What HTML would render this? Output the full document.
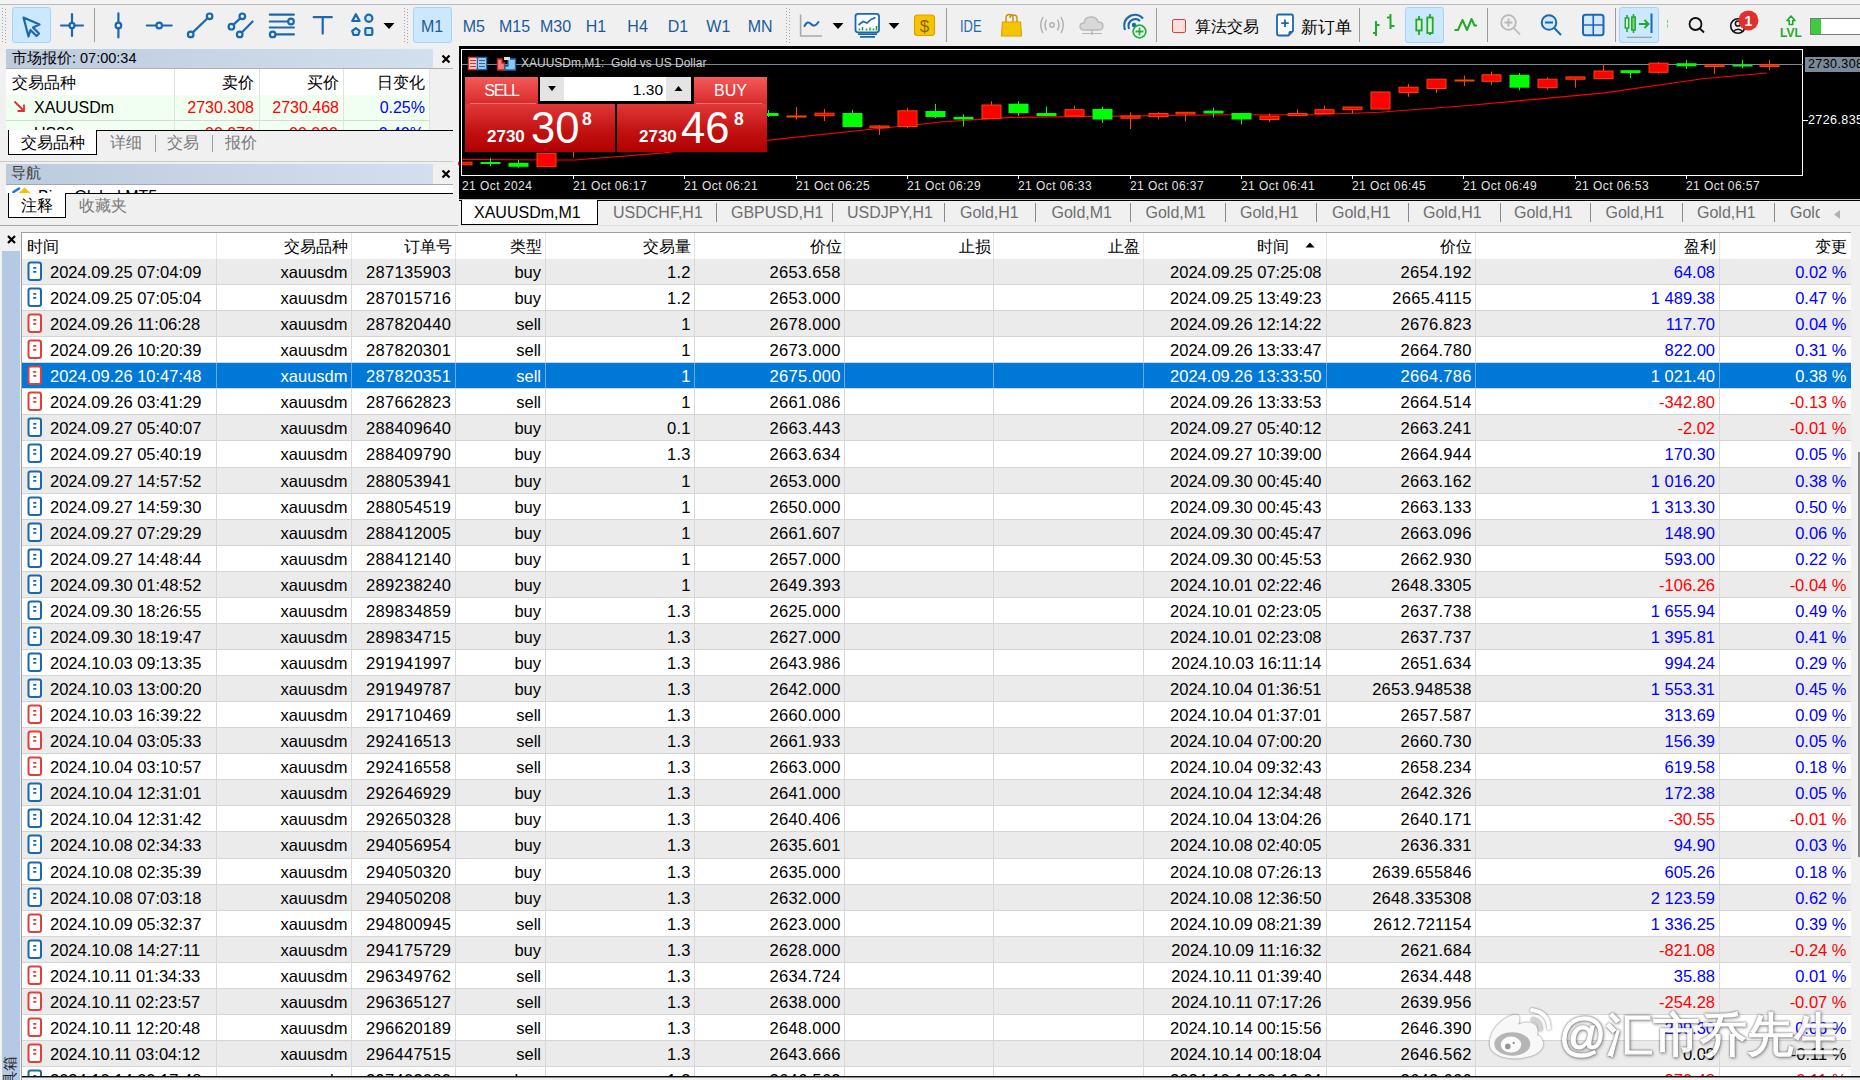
<!DOCTYPE html>
<html><head><meta charset="utf-8"><style>
html,body{margin:0;padding:0;}
body{width:1860px;height:1080px;overflow:hidden;position:relative;background:#f0f0f0;font-family:"Liberation Sans",sans-serif;}
div{box-sizing:content-box}
</style></head><body>
<div style="position:absolute;left:0;top:0;width:1860px;height:4px;background:#f3f3f3"></div>
<div style="position:absolute;left:0;top:4px;width:1860px;height:1px;background:#b8b8b8"></div>
<div style="position:absolute;left:0;top:5px;width:1860px;height:41px;background:#f0f0f0"></div>
<div style="position:absolute;left:2px;top:8px;width:1px;height:1px;background:#a8a8a8"></div><div style="position:absolute;left:5px;top:9px;width:1px;height:1px;background:#a8a8a8"></div><div style="position:absolute;left:2px;top:11px;width:1px;height:1px;background:#a8a8a8"></div><div style="position:absolute;left:5px;top:12px;width:1px;height:1px;background:#a8a8a8"></div><div style="position:absolute;left:2px;top:14px;width:1px;height:1px;background:#a8a8a8"></div><div style="position:absolute;left:5px;top:15px;width:1px;height:1px;background:#a8a8a8"></div><div style="position:absolute;left:2px;top:17px;width:1px;height:1px;background:#a8a8a8"></div><div style="position:absolute;left:5px;top:18px;width:1px;height:1px;background:#a8a8a8"></div><div style="position:absolute;left:2px;top:20px;width:1px;height:1px;background:#a8a8a8"></div><div style="position:absolute;left:5px;top:21px;width:1px;height:1px;background:#a8a8a8"></div><div style="position:absolute;left:2px;top:23px;width:1px;height:1px;background:#a8a8a8"></div><div style="position:absolute;left:5px;top:24px;width:1px;height:1px;background:#a8a8a8"></div><div style="position:absolute;left:2px;top:26px;width:1px;height:1px;background:#a8a8a8"></div><div style="position:absolute;left:5px;top:27px;width:1px;height:1px;background:#a8a8a8"></div><div style="position:absolute;left:2px;top:29px;width:1px;height:1px;background:#a8a8a8"></div><div style="position:absolute;left:5px;top:30px;width:1px;height:1px;background:#a8a8a8"></div><div style="position:absolute;left:2px;top:32px;width:1px;height:1px;background:#a8a8a8"></div><div style="position:absolute;left:5px;top:33px;width:1px;height:1px;background:#a8a8a8"></div><div style="position:absolute;left:2px;top:35px;width:1px;height:1px;background:#a8a8a8"></div><div style="position:absolute;left:5px;top:36px;width:1px;height:1px;background:#a8a8a8"></div><div style="position:absolute;left:2px;top:38px;width:1px;height:1px;background:#a8a8a8"></div><div style="position:absolute;left:5px;top:39px;width:1px;height:1px;background:#a8a8a8"></div><div style="position:absolute;left:2px;top:41px;width:1px;height:1px;background:#a8a8a8"></div><div style="position:absolute;left:5px;top:42px;width:1px;height:1px;background:#a8a8a8"></div>
<div style="position:absolute;left:12px;top:7px;width:37px;height:34px;background:#cce8ff;border:1px solid #a6d3f7;border-radius:3px"></div>
<svg style="position:absolute;left:0px;top:0px;" width="460" height="46" viewBox="0 0 460 46"><path d="M23.5 17.5 L39.5 24.5 L33 27.5 L39 33.5 L36.5 36 L30.5 30 L28.5 36.5 Z" stroke="#1a69b0" fill="none" stroke-width="2.2" stroke-linejoin="round" stroke-linecap="round"/><path d="M61 25.5 H69.5 M74.5 25.5 H83 M72 14 V23 M72 28 V36" stroke="#1a69b0" fill="none" stroke-width="2.2" stroke-linejoin="round" stroke-linecap="round"/><circle cx="72" cy="25.5" r="2.6" stroke="#1a69b0" fill="none" stroke-width="2.2" stroke-linejoin="round" stroke-linecap="round"/><path d="M118.4 13.4 V22.5 M118.4 28.5 V37.5" stroke="#1a69b0" fill="none" stroke-width="2.2" stroke-linejoin="round" stroke-linecap="round"/><circle cx="118.4" cy="25.5" r="2.8" stroke="#1a69b0" fill="none" stroke-width="2.2" stroke-linejoin="round" stroke-linecap="round"/><path d="M146.8 25.5 H156.2 M162.2 25.5 H171.7" stroke="#1a69b0" fill="none" stroke-width="2.2" stroke-linejoin="round" stroke-linecap="round"/><circle cx="159.2" cy="25.5" r="2.8" stroke="#1a69b0" fill="none" stroke-width="2.2" stroke-linejoin="round" stroke-linecap="round"/><path d="M192.8 32.4 L207.5 18.3" stroke="#1a69b0" fill="none" stroke-width="2.2" stroke-linejoin="round" stroke-linecap="round"/><circle cx="190.7" cy="34.4" r="2.8" stroke="#1a69b0" fill="none" stroke-width="2.2" stroke-linejoin="round" stroke-linecap="round"/><circle cx="209.6" cy="16.3" r="2.8" stroke="#1a69b0" fill="none" stroke-width="2.2" stroke-linejoin="round" stroke-linecap="round"/><path d="M233.5 24.6 L240.2 18.4 M241.8 32.4 L252.6 21.5" stroke="#1a69b0" fill="none" stroke-width="2.2" stroke-linejoin="round" stroke-linecap="round"/><circle cx="242.3" cy="16.3" r="2.8" stroke="#1a69b0" fill="none" stroke-width="2.2" stroke-linejoin="round" stroke-linecap="round"/><circle cx="231.4" cy="26.7" r="2.8" stroke="#1a69b0" fill="none" stroke-width="2.2" stroke-linejoin="round" stroke-linecap="round"/><circle cx="239.7" cy="34.4" r="2.8" stroke="#1a69b0" fill="none" stroke-width="2.2" stroke-linejoin="round" stroke-linecap="round"/><path d="M269.8 14.6 H293.9 M269.8 21.5 H288 M269.8 27.5 H293.9 M275.7 34.4 H293.9" stroke="#1a69b0" fill="none" stroke-width="2.2" stroke-linejoin="round" stroke-linecap="round"/><circle cx="291" cy="21.5" r="2.8" stroke="#1a69b0" fill="none" stroke-width="2.2" stroke-linejoin="round" stroke-linecap="round"/><circle cx="272.7" cy="34.4" r="2.8" stroke="#1a69b0" fill="none" stroke-width="2.2" stroke-linejoin="round" stroke-linecap="round"/><path d="M313.7 17.2 H331.8 M322.7 17.2 V33.6" stroke="#1a69b0" fill="none" stroke-width="2.2" stroke-linejoin="round" stroke-linecap="round"/><path d="M355.9 14.2 L359.6 21 H352.2 Z" fill="#cfe6fb" stroke="#1a69b0" fill="none" stroke-width="2.2" stroke-linejoin="round" stroke-linecap="round"/><circle cx="368.8" cy="18.2" r="3.6" fill="#cfe6fb" stroke="#1a69b0" stroke-width="2.2"/><path d="M355.9 28.2 L359.6 30.8 L358.3 35 H353.5 L352.2 30.8 Z" fill="#cfe6fb" stroke="#1a69b0" fill="none" stroke-width="2.2" stroke-linejoin="round" stroke-linecap="round"/><rect x="365.3" y="28" width="7" height="7" rx="1.2" fill="#cfe6fb" stroke="#1a69b0" fill="none" stroke-width="2.2" stroke-linejoin="round" stroke-linecap="round"/></svg>
<div style="position:absolute;left:94px;top:8px;width:1px;height:34px;background:#9a9a9a"></div>
<svg style="position:absolute;left:382px;top:21.5px;" width="14" height="8" viewBox="382 21.5 14 8"><path d="M383.5 22.5 L394.5 22.5 L389 28.5 Z" fill="#000"/></svg>
<div style="position:absolute;left:404px;top:8px;width:1px;height:1px;background:#a8a8a8"></div><div style="position:absolute;left:407px;top:9px;width:1px;height:1px;background:#a8a8a8"></div><div style="position:absolute;left:404px;top:11px;width:1px;height:1px;background:#a8a8a8"></div><div style="position:absolute;left:407px;top:12px;width:1px;height:1px;background:#a8a8a8"></div><div style="position:absolute;left:404px;top:14px;width:1px;height:1px;background:#a8a8a8"></div><div style="position:absolute;left:407px;top:15px;width:1px;height:1px;background:#a8a8a8"></div><div style="position:absolute;left:404px;top:17px;width:1px;height:1px;background:#a8a8a8"></div><div style="position:absolute;left:407px;top:18px;width:1px;height:1px;background:#a8a8a8"></div><div style="position:absolute;left:404px;top:20px;width:1px;height:1px;background:#a8a8a8"></div><div style="position:absolute;left:407px;top:21px;width:1px;height:1px;background:#a8a8a8"></div><div style="position:absolute;left:404px;top:23px;width:1px;height:1px;background:#a8a8a8"></div><div style="position:absolute;left:407px;top:24px;width:1px;height:1px;background:#a8a8a8"></div><div style="position:absolute;left:404px;top:26px;width:1px;height:1px;background:#a8a8a8"></div><div style="position:absolute;left:407px;top:27px;width:1px;height:1px;background:#a8a8a8"></div><div style="position:absolute;left:404px;top:29px;width:1px;height:1px;background:#a8a8a8"></div><div style="position:absolute;left:407px;top:30px;width:1px;height:1px;background:#a8a8a8"></div><div style="position:absolute;left:404px;top:32px;width:1px;height:1px;background:#a8a8a8"></div><div style="position:absolute;left:407px;top:33px;width:1px;height:1px;background:#a8a8a8"></div><div style="position:absolute;left:404px;top:35px;width:1px;height:1px;background:#a8a8a8"></div><div style="position:absolute;left:407px;top:36px;width:1px;height:1px;background:#a8a8a8"></div><div style="position:absolute;left:404px;top:38px;width:1px;height:1px;background:#a8a8a8"></div><div style="position:absolute;left:407px;top:39px;width:1px;height:1px;background:#a8a8a8"></div><div style="position:absolute;left:404px;top:41px;width:1px;height:1px;background:#a8a8a8"></div><div style="position:absolute;left:407px;top:42px;width:1px;height:1px;background:#a8a8a8"></div>
<div style="position:absolute;left:413px;top:7px;width:37px;height:34px;background:#cce8ff;border:1px solid #a6d3f7;border-radius:3px"></div>
<div style="position:absolute;left:402px;top:17px;width:60px;text-align:center;font-size:16px;line-height:20px;color:#1a5a9a">M1</div>
<div style="position:absolute;left:443.8px;top:17px;width:60px;text-align:center;font-size:16px;line-height:20px;color:#1a5a9a">M5</div>
<div style="position:absolute;left:484.6px;top:17px;width:60px;text-align:center;font-size:16px;line-height:20px;color:#1a5a9a">M15</div>
<div style="position:absolute;left:525.5px;top:17px;width:60px;text-align:center;font-size:16px;line-height:20px;color:#1a5a9a">M30</div>
<div style="position:absolute;left:566px;top:17px;width:60px;text-align:center;font-size:16px;line-height:20px;color:#1a5a9a">H1</div>
<div style="position:absolute;left:607.6px;top:17px;width:60px;text-align:center;font-size:16px;line-height:20px;color:#1a5a9a">H4</div>
<div style="position:absolute;left:648px;top:17px;width:60px;text-align:center;font-size:16px;line-height:20px;color:#1a5a9a">D1</div>
<div style="position:absolute;left:688.3px;top:17px;width:60px;text-align:center;font-size:16px;line-height:20px;color:#1a5a9a">W1</div>
<div style="position:absolute;left:730.2px;top:17px;width:60px;text-align:center;font-size:16px;line-height:20px;color:#1a5a9a">MN</div>
<div style="position:absolute;left:786px;top:8px;width:1px;height:1px;background:#a8a8a8"></div><div style="position:absolute;left:789px;top:9px;width:1px;height:1px;background:#a8a8a8"></div><div style="position:absolute;left:786px;top:11px;width:1px;height:1px;background:#a8a8a8"></div><div style="position:absolute;left:789px;top:12px;width:1px;height:1px;background:#a8a8a8"></div><div style="position:absolute;left:786px;top:14px;width:1px;height:1px;background:#a8a8a8"></div><div style="position:absolute;left:789px;top:15px;width:1px;height:1px;background:#a8a8a8"></div><div style="position:absolute;left:786px;top:17px;width:1px;height:1px;background:#a8a8a8"></div><div style="position:absolute;left:789px;top:18px;width:1px;height:1px;background:#a8a8a8"></div><div style="position:absolute;left:786px;top:20px;width:1px;height:1px;background:#a8a8a8"></div><div style="position:absolute;left:789px;top:21px;width:1px;height:1px;background:#a8a8a8"></div><div style="position:absolute;left:786px;top:23px;width:1px;height:1px;background:#a8a8a8"></div><div style="position:absolute;left:789px;top:24px;width:1px;height:1px;background:#a8a8a8"></div><div style="position:absolute;left:786px;top:26px;width:1px;height:1px;background:#a8a8a8"></div><div style="position:absolute;left:789px;top:27px;width:1px;height:1px;background:#a8a8a8"></div><div style="position:absolute;left:786px;top:29px;width:1px;height:1px;background:#a8a8a8"></div><div style="position:absolute;left:789px;top:30px;width:1px;height:1px;background:#a8a8a8"></div><div style="position:absolute;left:786px;top:32px;width:1px;height:1px;background:#a8a8a8"></div><div style="position:absolute;left:789px;top:33px;width:1px;height:1px;background:#a8a8a8"></div><div style="position:absolute;left:786px;top:35px;width:1px;height:1px;background:#a8a8a8"></div><div style="position:absolute;left:789px;top:36px;width:1px;height:1px;background:#a8a8a8"></div><div style="position:absolute;left:786px;top:38px;width:1px;height:1px;background:#a8a8a8"></div><div style="position:absolute;left:789px;top:39px;width:1px;height:1px;background:#a8a8a8"></div><div style="position:absolute;left:786px;top:41px;width:1px;height:1px;background:#a8a8a8"></div><div style="position:absolute;left:789px;top:42px;width:1px;height:1px;background:#a8a8a8"></div>
<svg style="position:absolute;left:780px;top:0px;" width="400" height="46" viewBox="780 0 400 46"><path d="M800.6 14.6 V36 H822" stroke="#a8a8a8" stroke-width="1.6" fill="none"/><path d="M804.5 26 Q807.5 20 811 24 T818.5 22" stroke="#1a69b0" stroke-width="2" fill="none" stroke-linecap="round"/><rect x="855.5" y="13.8" width="23.5" height="18.5" rx="2.5" fill="#fff" stroke="#1a69b0" stroke-width="1.8"/><path d="M858.5 25 L863 21.5 L867 23 L871 19.5 L875.5 17.5" stroke="#1a69b0" stroke-width="1.6" fill="none"/><path d="M859.5 30.5 V28.5 M862.5 30.5 V27 M866.5 30.5 V28.5 M870 30.5 V27.5 M873.5 30.5 V28.5 M876.5 30.5 V26" stroke="#1fa33a" stroke-width="1.6"/><path d="M858 34.2 H877 M860 36.8 H875" stroke="#1a69b0" stroke-width="1.8"/><rect x="914.5" y="15" width="20" height="20.5" rx="3" fill="#f7c500" stroke="#d9a300" stroke-width="1.2"/><text x="924.5" y="31.5" text-anchor="middle" font-family="Liberation Sans" font-size="17" fill="#8a6400">$</text><text x="960" y="31.8" font-family="Liberation Sans" font-size="16.5" textLength="21.5" lengthAdjust="spacingAndGlyphs" fill="#1a69b0">IDE</text><path d="M1002.5 22 H1020.5 L1021.5 36 H1001.5 Z" fill="#f7c500" stroke="#d9a300" stroke-width="1.2"/><path d="M1006 22 V18 Q1006 14.5 1009.5 14.5 Q1013 14.5 1013 18 V22 M1010 18 Q1010 15 1013.5 15 Q1017 15 1017 18 V22" stroke="#c79000" stroke-width="1.4" fill="none"/><circle cx="1052" cy="25" r="2.2" fill="none" stroke="#b0b0b0" stroke-width="1.5"/><path d="M1046.5 19.5 Q1043.5 25 1046.5 30.5 M1057.5 19.5 Q1060.5 25 1057.5 30.5 M1043 17 Q1038.5 25 1043 33 M1061 17 Q1065.5 25 1061 33" stroke="#b0b0b0" stroke-width="1.5" fill="none"/><path d="M1084 30 Q1080 30 1080 26.5 Q1080 23 1084 23 Q1084.5 17 1091 17 Q1097 17 1098 22 Q1103 22 1103 26 Q1103 30 1099 30 Z" fill="#d8d8d8" stroke="#b8b8b8" stroke-width="1.3"/><path d="M1092 30 V33.5 M1082 33.5 H1102" stroke="#b8b8b8" stroke-width="1.2"/><circle cx="1092" cy="33.5" r="1.3" fill="#b8b8b8"/><path d="M1125 30 Q1122 20 1131 15.5 Q1138 13 1143 18.5" stroke="#1a69b0" stroke-width="2" fill="none"/><path d="M1129 29 Q1127 22 1133 19.5 Q1137 18 1140 21" stroke="#1a69b0" stroke-width="2" fill="none"/><circle cx="1134" cy="25" r="2.2" fill="#1a69b0"/><circle cx="1139.5" cy="31.5" r="6.3" fill="#fff" stroke="#22b03c" stroke-width="1.8"/><path d="M1139.5 27.5 V35.5 M1135.5 31.5 H1143.5" stroke="#22b03c" stroke-width="1.8"/></svg>
<svg style="position:absolute;left:831px;top:21.5px;" width="14" height="8" viewBox="831 21.5 14 8"><path d="M832.5 22.5 L843.5 22.5 L838 28.5 Z" fill="#000"/></svg>
<svg style="position:absolute;left:887px;top:21.5px;" width="14" height="8" viewBox="887 21.5 14 8"><path d="M888.5 22.5 L899.5 22.5 L894 28.5 Z" fill="#000"/></svg>
<div style="position:absolute;left:946px;top:8px;width:1px;height:34px;background:#9a9a9a"></div>
<div style="position:absolute;left:1156px;top:8px;width:1px;height:34px;background:#9a9a9a"></div>
<div style="position:absolute;left:1172px;top:19px;width:11.5px;height:11.5px;background:#fde0dc;border:1.5px solid #e0403a;border-radius:2px"></div>
<div style="position:absolute;left:1195px;top:15.5px;font-size:15.5px;line-height:22px;color:#000">算法交易</div>
<svg style="position:absolute;left:1270px;top:10px;" width="30" height="30" viewBox="1270 10 30 30"><path d="M1278.5 14.5 H1291.5 Q1293 14.5 1293 16 V31 L1288.5 35.5 H1278.5 Q1277 35.5 1277 34 V16 Q1277 14.5 1278.5 14.5 Z" fill="#fff" stroke="#1a69b0" stroke-width="1.8"/><path d="M1293 31 L1288.5 35.5 V32.5 Q1288.5 31 1290 31 Z" fill="#1a69b0"/><path d="M1285 19.5 V27 M1281.2 23.2 H1288.8" stroke="#1a69b0" stroke-width="1.8"/></svg>
<div style="position:absolute;left:1301px;top:15.5px;font-size:16.5px;line-height:22px;color:#000">新订单</div>
<div style="position:absolute;left:1359px;top:8px;width:1px;height:34px;background:#9a9a9a"></div>
<div style="position:absolute;left:1487px;top:8px;width:1px;height:34px;background:#9a9a9a"></div>
<div style="position:absolute;left:1615px;top:8px;width:1px;height:34px;background:#9a9a9a"></div>
<div style="position:absolute;left:1405px;top:7px;width:37px;height:34px;background:#cce8ff;border:1px solid #a6d3f7;border-radius:3px"></div>
<div style="position:absolute;left:1619px;top:7px;width:38px;height:34px;background:#cce8ff;border:1px solid #a6d3f7;border-radius:3px"></div>
<svg style="position:absolute;left:1360px;top:0px;" width="500" height="46" viewBox="1360 0 500 46"><path d="M1376 21 V36 M1373 33 H1376 M1376 25 H1379.5" stroke="#1faa2a" stroke-width="2"/><path d="M1390.5 14 V29 M1387 17.5 H1390.5 M1390.5 26 H1394.5" stroke="#1faa2a" stroke-width="2"/><path d="M1419 16 V35 M1430 14 V35" stroke="#1faa2a" stroke-width="1.8"/><rect x="1416.3" y="19.5" width="5.4" height="11" fill="#dff7df" stroke="#1faa2a" stroke-width="1.8"/><rect x="1427.3" y="17.5" width="5.4" height="15.5" fill="#dff7df" stroke="#1faa2a" stroke-width="1.8"/><path d="M1454.5 30 H1458 L1462.5 20 L1467 30 L1471.5 19 L1474.5 25.5 H1477" stroke="#1faa2a" stroke-width="2" fill="none" stroke-linejoin="round"/><circle cx="1508.5" cy="22.5" r="7.3" fill="none" stroke="#b8b8b8" stroke-width="1.8"/><path d="M1513.8 28 L1520 34.5 M1504.5 22.5 H1512.5 M1508.5 18.5 V26.5" stroke="#b8b8b8" stroke-width="1.8"/><circle cx="1549" cy="22.5" r="7.3" fill="#d4e8fa" stroke="#1a69b0" stroke-width="2"/><path d="M1554.3 28 L1561 35 M1545 22.5 H1553" stroke="#1a69b0" stroke-width="2"/><rect x="1583" y="14.8" width="20.5" height="20.5" rx="2.5" fill="#d4e8fa" stroke="#1a69b0" stroke-width="2"/><path d="M1593.25 14.8 V35.3 M1583 25 H1603.5" stroke="#1a69b0" stroke-width="1.6"/><path d="M1627 15 V32 M1633.5 14 V33" stroke="#1faa2a" stroke-width="1.6"/><rect x="1625.3" y="18" width="3.4" height="10" fill="#dff7df" stroke="#1faa2a" stroke-width="1.5"/><rect x="1631.8" y="17" width="3.4" height="13" fill="#7ed67e" stroke="#1faa2a" stroke-width="1.5"/><path d="M1639 24 H1648 M1644.5 20 L1648.5 24 L1644.5 28" stroke="#1faa2a" stroke-width="1.8" fill="none"/><path d="M1651.5 13.5 V33" stroke="#1a69b0" stroke-width="2"/><path d="M1627 37.3 H1652" stroke="#9a9a9a" stroke-width="1.2"/><path d="M1667.5 20 V28" stroke="#7ccf7c" stroke-width="1" stroke-dasharray="3 1.5"/><circle cx="1695.5" cy="24" r="6" fill="none" stroke="#111" stroke-width="1.8"/><path d="M1699.8 28.5 L1704 32.5" stroke="#111" stroke-width="1.9"/><circle cx="1738" cy="26" r="7.3" fill="none" stroke="#111" stroke-width="1.6"/><circle cx="1738" cy="23.5" r="2.6" fill="none" stroke="#111" stroke-width="1.5"/><path d="M1733 31.8 Q1738 26.5 1743 31.8" fill="none" stroke="#111" stroke-width="1.5"/><circle cx="1748.4" cy="20.4" r="10" fill="#e0302a"/><text x="1748.4" y="25.5" text-anchor="middle" font-family="Liberation Sans" font-size="14" font-weight="bold" fill="#fff">1</text><path d="M1791 16 L1795 20.5 H1792.8 V24.5 H1789.2 V20.5 H1787 Z" fill="none" stroke="#1faa2a" stroke-width="1.6" stroke-linejoin="round"/><text x="1791" y="37" text-anchor="middle" font-family="Liberation Sans" font-size="12" font-weight="bold" fill="#1faa2a">LVL</text></svg>
<div style="position:absolute;left:1810px;top:18px;width:60px;height:15px;background:#fff;border:1px solid #7a7a7a"></div>
<div style="position:absolute;left:1811px;top:19px;width:10px;height:15px;background:#3ccc3c"></div>
<div style="position:absolute;left:0px;top:46px;width:458px;height:180px;background:#f0f0f0"></div>
<div style="position:absolute;left:6px;top:49px;width:427px;height:19px;background:linear-gradient(90deg,#bccbdd,#d2dfee)"></div>
<div style="position:absolute;left:12px;top:48px;line-height:21px;white-space:nowrap;font-size:14.5px;color:#000">市场报价: 07:00:34</div>
<svg style="position:absolute;left:439.5px;top:52.5px" width="12" height="12" viewBox="0 0 12 12"><path d="M2.5 2.5 L9.5 9.5 M9.5 2.5 L2.5 9.5" stroke="#000" stroke-width="2.2"/></svg>
<div style="position:absolute;left:6px;top:68px;width:447px;height:1px;background:#b0b0b0"></div>
<div style="position:absolute;left:6px;top:69px;width:424px;height:26px;background:#fff"></div>
<div style="position:absolute;left:6px;top:95px;width:424px;height:25px;background:#f0fff0"></div>
<div style="position:absolute;left:6px;top:120px;width:424px;height:1px;background:#d8d8d8"></div>
<div style="position:absolute;left:6px;top:121px;width:424px;height:9px;background:#f0fff0"></div>
<div style="position:absolute;left:174px;top:69px;width:1px;height:61px;background:#e2e2e2"></div>
<div style="position:absolute;left:259px;top:69px;width:1px;height:61px;background:#e2e2e2"></div>
<div style="position:absolute;left:343px;top:69px;width:1px;height:61px;background:#e2e2e2"></div>
<div style="position:absolute;left:429px;top:69px;width:1px;height:61px;background:#e2e2e2"></div>
<div style="position:absolute;left:12px;top:72px;line-height:21px;white-space:nowrap;font-size:15.5px;color:#000">交易品种</div>
<div style="position:absolute;left:-46px;width:300px;text-align:right;top:72px;line-height:21px;white-space:nowrap;font-size:15.5px;color:#000">卖价</div>
<div style="position:absolute;left:39px;width:300px;text-align:right;top:72px;line-height:21px;white-space:nowrap;font-size:15.5px;color:#000">买价</div>
<div style="position:absolute;left:125px;width:300px;text-align:right;top:72px;line-height:21px;white-space:nowrap;font-size:15.5px;color:#000">日变化</div>
<svg style="position:absolute;left:12px;top:99px" width="16" height="16" viewBox="0 0 16 16"><path d="M2.5 2.5 L12 12 M12 5.5 V12 H5.5" stroke="#e03030" stroke-width="1.8" fill="none"/></svg>
<div style="position:absolute;left:34px;top:97px;line-height:21px;white-space:nowrap;font-size:16px;color:#000">XAUUSDm</div>
<div style="position:absolute;left:-46px;width:300px;text-align:right;top:97px;line-height:21px;white-space:nowrap;font-size:16px;color:#ff0000">2730.308</div>
<div style="position:absolute;left:39px;width:300px;text-align:right;top:97px;line-height:21px;white-space:nowrap;font-size:16px;color:#ff0000">2730.468</div>
<div style="position:absolute;left:125px;width:300px;text-align:right;top:97px;line-height:21px;white-space:nowrap;font-size:16px;color:#0000ff">0.25%</div>
<div style="position:absolute;left:6px;top:121px;width:424px;height:9px;overflow:hidden"><div style="position:absolute;left:28px;top:2px;line-height:21px;font-size:16px;color:#000">US30m</div><div style="position:absolute;left:178px;width:70px;text-align:right;top:2px;line-height:21px;font-size:16px;color:#ff0000">00.070</div><div style="position:absolute;left:262px;width:70px;text-align:right;top:2px;line-height:21px;font-size:16px;color:#ff0000">00.090</div><div style="position:absolute;left:350px;width:68px;text-align:right;top:2px;line-height:21px;font-size:16px;color:#0000ff">0.40%</div></div>
<div style="position:absolute;left:96px;top:130px;width:357px;height:1px;background:#000"></div>
<div style="position:absolute;left:8px;top:130px;width:87px;height:24px;background:#fff;border:1.5px solid #000;border-top:none"></div>
<div style="position:absolute;left:21px;top:132px;line-height:21px;white-space:nowrap;font-size:15.5px;color:#000">交易品种</div>
<div style="position:absolute;left:110px;top:132px;line-height:21px;white-space:nowrap;font-size:15.5px;color:#7a7a7a">详细</div>
<div style="position:absolute;left:155px;top:135px;width:1px;height:17px;background:#9a9a9a"></div>
<div style="position:absolute;left:167px;top:132px;line-height:21px;white-space:nowrap;font-size:15.5px;color:#7a7a7a">交易</div>
<div style="position:absolute;left:212px;top:135px;width:1px;height:17px;background:#9a9a9a"></div>
<div style="position:absolute;left:225px;top:132px;line-height:21px;white-space:nowrap;font-size:15.5px;color:#7a7a7a">报价</div>
<div style="position:absolute;left:0px;top:161px;width:458px;height:1px;background:#c9c9c9"></div>
<div style="position:absolute;left:6px;top:164px;width:427px;height:20px;background:linear-gradient(90deg,#bccbdd,#d2dfee)"></div>
<div style="position:absolute;left:11px;top:163px;line-height:20px;white-space:nowrap;font-size:14.5px;color:#404040">导航</div>
<svg style="position:absolute;left:439.5px;top:168px" width="12" height="12" viewBox="0 0 12 12"><path d="M2.5 2.5 L9.5 9.5 M9.5 2.5 L2.5 9.5" stroke="#000" stroke-width="2.2"/></svg>
<div style="position:absolute;left:6px;top:184px;width:447px;height:1px;background:#a8a8a8"></div>
<div style="position:absolute;left:6px;top:185px;width:447px;height:8px;background:#fff"></div>
<svg style="position:absolute;left:10px;top:185px" width="24" height="8" viewBox="10 185 24 8"><path d="M13.5 192 L19 188.5" stroke="#1a73e8" stroke-width="2.6" stroke-linecap="round"/><path d="M18 193.5 L24.5 187.5 L31 193.5 Z" fill="#f5c400"/></svg>
<div style="position:absolute;left:36px;top:185px;width:140px;height:8px;overflow:hidden"><div style="position:absolute;left:2px;top:2px;line-height:20px;font-size:16px;color:#000;white-space:nowrap">Bi&nbsp;&nbsp;&nbsp;&nbsp;&nbsp;Global&nbsp;MT5</div></div>
<div style="position:absolute;left:66px;top:193px;width:387px;height:1px;background:#000"></div>
<div style="position:absolute;left:8px;top:193px;width:56px;height:24px;background:#fff;border:1.5px solid #000;border-top:none"></div>
<div style="position:absolute;left:21px;top:195px;line-height:21px;white-space:nowrap;font-size:15.5px;color:#000">注释</div>
<div style="position:absolute;left:79px;top:195px;line-height:21px;white-space:nowrap;font-size:15.5px;color:#7a7a7a">收藏夹</div>
<div style="position:absolute;left:0px;top:225px;width:458px;height:1px;background:#a8a8a8"></div>
<div style="position:absolute;left:459px;top:46px;width:1401px;height:153px;background:#000"></div>
<div style="position:absolute;left:453px;top:46px;width:6px;height:154px;background:#f0f0f0"></div>
<svg style="position:absolute;left:458px;top:46px" width="1402" height="154" viewBox="458 46 1402 154"><rect x="461.5" y="49.5" width="1341" height="126" fill="none" stroke="#fff" stroke-width="1"/><path d="M462 64.5 H1803" stroke="#7a8a9a" stroke-width="1"/><polyline points="462,159.4 555,160 575,160 664,152.9 775.5,139.4 866.5,129.7 916.8,124.7 940,122 1011,117.4 1119,116.1 1222.6,114.8 1313,114.8 1380,112.3 1465,105.8 1604.5,92.9 1702.6,78.7 1767,73" fill="none" stroke="#ff0000" stroke-width="1.1"/><path d="M462.5 162.2 V164.8" stroke="#ff4500" stroke-width="1"/><rect x="453.0" y="162.2" width="19" height="2.6000000000000227" fill="#ff0000" stroke="#ff4500" stroke-width="1"/><path d="M490.5 158 V166.5" stroke="#00ff00" stroke-width="1"/><rect x="480.5" y="162" width="20" height="2" fill="#00ff00"/><path d="M518.5 160 V167.7" stroke="#00ff00" stroke-width="1"/><rect x="508.5" y="162.8" width="20" height="4.0" fill="#00ff00"/><path d="M546.5 153.3 V166.7" stroke="#ff4500" stroke-width="1"/><rect x="537.0" y="153.3" width="19" height="13.399999999999977" fill="#ff0000" stroke="#ff4500" stroke-width="1"/><path d="M573.5 148 V157.7" stroke="#ff4500" stroke-width="1"/><rect x="564.0" y="148" width="19" height="2" fill="#ff0000" stroke="#ff4500" stroke-width="1"/><path d="M768.5 110 V117" stroke="#00ff00" stroke-width="1"/><rect x="758.5" y="113" width="20" height="3" fill="#00ff00"/><path d="M796.5 107 V119.5" stroke="#ff4500" stroke-width="1"/><rect x="787.0" y="116" width="19" height="1" fill="#ff0000" stroke="#ff4500" stroke-width="1"/><path d="M824.5 108.9 V121" stroke="#ff4500" stroke-width="1"/><rect x="815.0" y="113.2" width="19" height="2.5" fill="#ff0000" stroke="#ff4500" stroke-width="1"/><path d="M852.5 109.8 V127" stroke="#00ff00" stroke-width="1"/><rect x="842.5" y="113" width="20" height="14" fill="#00ff00"/><path d="M879.5 125 V135" stroke="#ff4500" stroke-width="1"/><rect x="870.0" y="126" width="19" height="1.7999999999999972" fill="#ff0000" stroke="#ff4500" stroke-width="1"/><path d="M907.5 107.9 V127.8" stroke="#ff4500" stroke-width="1"/><rect x="898.0" y="110.8" width="19" height="15.799999999999997" fill="#ff0000" stroke="#ff4500" stroke-width="1"/><path d="M935.5 104 V118" stroke="#00ff00" stroke-width="1"/><rect x="925.5" y="111" width="20" height="6" fill="#00ff00"/><path d="M963.5 114.3 V126.5" stroke="#00ff00" stroke-width="1"/><rect x="953.5" y="116.9" width="20" height="2.5999999999999943" fill="#00ff00"/><path d="M991.5 101.2 V118.7" stroke="#ff4500" stroke-width="1"/><rect x="982.0" y="105" width="19" height="13.700000000000003" fill="#ff0000" stroke="#ff4500" stroke-width="1"/><path d="M1018.5 101.2 V116" stroke="#00ff00" stroke-width="1"/><rect x="1008.5" y="103.7" width="20" height="9.299999999999997" fill="#00ff00"/><path d="M1046.5 106.6 V116.1" stroke="#00ff00" stroke-width="1"/><rect x="1036.5" y="113" width="20" height="3.0999999999999943" fill="#00ff00"/><path d="M1074.5 105.8 V116.1" stroke="#ff4500" stroke-width="1"/><rect x="1065.0" y="109.7" width="19" height="6.3999999999999915" fill="#ff0000" stroke="#ff4500" stroke-width="1"/><path d="M1102.5 106.6 V123" stroke="#00ff00" stroke-width="1"/><rect x="1092.5" y="108.9" width="20" height="10.599999999999994" fill="#00ff00"/><path d="M1130.5 112.3 V129" stroke="#ff4500" stroke-width="1"/><rect x="1121.0" y="116.1" width="19" height="2.1000000000000085" fill="#ff0000" stroke="#ff4500" stroke-width="1"/><path d="M1158.5 112.3 V119.5" stroke="#ff4500" stroke-width="1"/><rect x="1149.0" y="113.5" width="19" height="3.0999999999999943" fill="#ff0000" stroke="#ff4500" stroke-width="1"/><path d="M1185.5 112.3 V121.3" stroke="#ff4500" stroke-width="1"/><rect x="1176.0" y="112.3" width="19" height="1.7000000000000028" fill="#ff0000" stroke="#ff4500" stroke-width="1"/><path d="M1213.5 107.6 V117.4" stroke="#00ff00" stroke-width="1"/><rect x="1203.5" y="110.7" width="20" height="2.799999999999997" fill="#00ff00"/><path d="M1241.5 113 V124.6" stroke="#00ff00" stroke-width="1"/><rect x="1231.5" y="113" width="20" height="6.5" fill="#00ff00"/><path d="M1269.5 113.5 V122" stroke="#ff4500" stroke-width="1"/><rect x="1260.0" y="116.1" width="19" height="3.4000000000000057" fill="#ff0000" stroke="#ff4500" stroke-width="1"/><path d="M1297.5 109.2 V115.6" stroke="#ff4500" stroke-width="1"/><rect x="1288.0" y="113.5" width="19" height="2.0999999999999943" fill="#ff0000" stroke="#ff4500" stroke-width="1"/><path d="M1324.5 105.8 V113.5" stroke="#ff4500" stroke-width="1"/><rect x="1315.0" y="109.7" width="19" height="3.799999999999997" fill="#ff0000" stroke="#ff4500" stroke-width="1"/><path d="M1352.5 107 V113.5" stroke="#ff4500" stroke-width="1"/><rect x="1343.0" y="107" width="19" height="2.700000000000003" fill="#ff0000" stroke="#ff4500" stroke-width="1"/><path d="M1380.5 92 V109" stroke="#ff4500" stroke-width="1"/><rect x="1371.0" y="92" width="19" height="17" fill="#ff0000" stroke="#ff4500" stroke-width="1"/><path d="M1408.5 83.9 V96.8" stroke="#ff4500" stroke-width="1"/><rect x="1399.0" y="87.2" width="19" height="5.200000000000003" fill="#ff0000" stroke="#ff4500" stroke-width="1"/><path d="M1436.5 79.2 V92.9" stroke="#ff4500" stroke-width="1"/><rect x="1427.0" y="79.2" width="19" height="9.299999999999997" fill="#ff0000" stroke="#ff4500" stroke-width="1"/><path d="M1464.5 75.6 V86" stroke="#ff4500" stroke-width="1"/><rect x="1455.0" y="80" width="19" height="1" fill="#ff0000" stroke="#ff4500" stroke-width="1"/><path d="M1491.5 71.5 V85.2" stroke="#ff4500" stroke-width="1"/><rect x="1482.0" y="74.8" width="19" height="6.5" fill="#ff0000" stroke="#ff4500" stroke-width="1"/><path d="M1519.5 73 V90.3" stroke="#00ff00" stroke-width="1"/><rect x="1509.5" y="74.8" width="20" height="12.900000000000006" fill="#00ff00"/><path d="M1547.5 77.4 V89.8" stroke="#ff4500" stroke-width="1"/><rect x="1538.0" y="79.2" width="19" height="8.5" fill="#ff0000" stroke="#ff4500" stroke-width="1"/><path d="M1575.5 76.9 V87.7" stroke="#ff4500" stroke-width="1"/><rect x="1566.0" y="76.9" width="19" height="2.299999999999997" fill="#ff0000" stroke="#ff4500" stroke-width="1"/><path d="M1603.5 64.5 V78.7" stroke="#ff4500" stroke-width="1"/><rect x="1594.0" y="71" width="19" height="7.700000000000003" fill="#ff0000" stroke="#ff4500" stroke-width="1"/><path d="M1630.5 70.2 V78.2" stroke="#00ff00" stroke-width="1"/><rect x="1620.5" y="70.2" width="20" height="2.799999999999997" fill="#00ff00"/><path d="M1658.5 62 V73.5" stroke="#ff4500" stroke-width="1"/><rect x="1649.0" y="63.2" width="19" height="9.099999999999994" fill="#ff0000" stroke="#ff4500" stroke-width="1"/><path d="M1686.5 60 V69" stroke="#00ff00" stroke-width="1"/><rect x="1676.5" y="63.2" width="20" height="3.0999999999999943" fill="#00ff00"/><path d="M1714.5 64.9 V73.9" stroke="#ff4500" stroke-width="1"/><rect x="1705.0" y="64.9" width="19" height="1.5999999999999943" fill="#ff0000" stroke="#ff4500" stroke-width="1"/><path d="M1742.5 59.7 V68.3" stroke="#00ff00" stroke-width="1"/><rect x="1732.5" y="64.9" width="20" height="1.5999999999999943" fill="#00ff00"/><path d="M1769.5 59.7 V70" stroke="#ff4500" stroke-width="1"/><rect x="1760.0" y="64.9" width="19" height="1.5999999999999943" fill="#ff0000" stroke="#ff4500" stroke-width="1"/><path d="M573.5 175 V179" stroke="#fff" stroke-width="1"/><path d="M684.5 175 V179" stroke="#fff" stroke-width="1"/><path d="M796.5 175 V179" stroke="#fff" stroke-width="1"/><path d="M907.5 175 V179" stroke="#fff" stroke-width="1"/><path d="M1018.5 175 V179" stroke="#fff" stroke-width="1"/><path d="M1130.5 175 V179" stroke="#fff" stroke-width="1"/><path d="M1241.5 175 V179" stroke="#fff" stroke-width="1"/><path d="M1352.5 175 V179" stroke="#fff" stroke-width="1"/><path d="M1463.5 175 V179" stroke="#fff" stroke-width="1"/><path d="M1575.5 175 V179" stroke="#fff" stroke-width="1"/><path d="M1686.5 175 V179" stroke="#fff" stroke-width="1"/><path d="M1803 120.5 H1808" stroke="#fff" stroke-width="1"/></svg>
<div style="position:absolute;left:459px;top:150px;width:2px;height:30px;background:#000"></div>
<div style="position:absolute;left:461px;top:150px;width:1px;height:25px;background:#fff"></div>
<div style="position:absolute;left:462px;top:178px;line-height:16px;white-space:nowrap;font-size:12px;color:#e2e2e2;letter-spacing:0.45px">21 Oct 2024</div>
<div style="position:absolute;left:573px;top:178px;line-height:16px;white-space:nowrap;font-size:12px;color:#e2e2e2;letter-spacing:0.45px">21 Oct 06:17</div>
<div style="position:absolute;left:684px;top:178px;line-height:16px;white-space:nowrap;font-size:12px;color:#e2e2e2;letter-spacing:0.45px">21 Oct 06:21</div>
<div style="position:absolute;left:796px;top:178px;line-height:16px;white-space:nowrap;font-size:12px;color:#e2e2e2;letter-spacing:0.45px">21 Oct 06:25</div>
<div style="position:absolute;left:907px;top:178px;line-height:16px;white-space:nowrap;font-size:12px;color:#e2e2e2;letter-spacing:0.45px">21 Oct 06:29</div>
<div style="position:absolute;left:1018px;top:178px;line-height:16px;white-space:nowrap;font-size:12px;color:#e2e2e2;letter-spacing:0.45px">21 Oct 06:33</div>
<div style="position:absolute;left:1130px;top:178px;line-height:16px;white-space:nowrap;font-size:12px;color:#e2e2e2;letter-spacing:0.45px">21 Oct 06:37</div>
<div style="position:absolute;left:1241px;top:178px;line-height:16px;white-space:nowrap;font-size:12px;color:#e2e2e2;letter-spacing:0.45px">21 Oct 06:41</div>
<div style="position:absolute;left:1352px;top:178px;line-height:16px;white-space:nowrap;font-size:12px;color:#e2e2e2;letter-spacing:0.45px">21 Oct 06:45</div>
<div style="position:absolute;left:1463px;top:178px;line-height:16px;white-space:nowrap;font-size:12px;color:#e2e2e2;letter-spacing:0.45px">21 Oct 06:49</div>
<div style="position:absolute;left:1575px;top:178px;line-height:16px;white-space:nowrap;font-size:12px;color:#e2e2e2;letter-spacing:0.45px">21 Oct 06:53</div>
<div style="position:absolute;left:1686px;top:178px;line-height:16px;white-space:nowrap;font-size:12px;color:#e2e2e2;letter-spacing:0.45px">21 Oct 06:57</div>
<div style="position:absolute;left:1805px;top:57px;width:55px;height:14.5px;background:#7a8a9a"></div>
<div style="position:absolute;left:1808px;top:56px;line-height:16px;white-space:nowrap;font-size:12.5px;color:#000;letter-spacing:0.4px">2730.308</div>
<div style="position:absolute;left:1808px;top:112px;line-height:16px;white-space:nowrap;font-size:12.5px;color:#fff;letter-spacing:0.4px">2726.835</div>
<svg style="position:absolute;left:466px;top:55px" width="54" height="18" viewBox="466 55 54 18"><rect x="468.5" y="57.5" width="9" height="12" fill="#fff" stroke="#e03030" stroke-width="1.5"/><path d="M470 60.5 H476 M470 63.5 H476 M470 66.5 H476" stroke="#e03030" stroke-width="1.4"/><rect x="477.5" y="57.5" width="9" height="12" fill="#cfe6fb" stroke="#1a69b0" stroke-width="1.5"/><path d="M479 60.5 H485 M479 63.5 H485 M479 66.5 H485" stroke="#1a69b0" stroke-width="1.4"/><path d="M497.5 59 H502 V63 H504.5 V70 H497.5 Z" fill="#f08080" stroke="#d02020" stroke-width="1.3"/><path d="M505 66 H508 V59 H515.5 V70 H505 Z" fill="#8ec6f0" stroke="#1a69b0" stroke-width="1.3"/><rect x="504" y="57" width="6" height="3" fill="#ddd"/></svg>
<div style="position:absolute;left:521px;top:55px;line-height:16px;white-space:nowrap;font-size:12px;color:#cfcfcf">XAUUSDm,M1:&nbsp; Gold vs US Dollar</div>
<div style="position:absolute;left:465px;top:77px;width:73px;height:27px;background:linear-gradient(#f55a5a,#d82a2a)"></div>
<div style="position:absolute;left:470px;top:103px;width:66px;height:1px;background:#f07070"></div>
<div style="position:absolute;left:465px;top:80px;line-height:22px;white-space:nowrap;font-size:16px;color:#fff;width:73px;text-align:center;letter-spacing:-1.2px">SELL</div>
<div style="position:absolute;left:694px;top:77px;width:73px;height:27px;background:linear-gradient(#f55a5a,#d82a2a)"></div>
<div style="position:absolute;left:696px;top:103px;width:66px;height:1px;background:#f07070"></div>
<div style="position:absolute;left:694px;top:80px;line-height:22px;white-space:nowrap;font-size:16px;color:#fff;width:73px;text-align:center">BUY</div>
<div style="position:absolute;left:539px;top:77px;width:154px;height:26px;background:#000"></div>
<div style="position:absolute;left:540px;top:77px;width:24px;height:24px;background:#e4e4e4"></div>
<div style="position:absolute;left:564px;top:77px;width:102px;height:24px;background:#fff"></div>
<div style="position:absolute;left:666px;top:77px;width:25px;height:24px;background:#e4e4e4"></div>
<svg style="position:absolute;left:540px;top:77px" width="152" height="24" viewBox="540 77 152 24"><path d="M548 86 H556 L552 91 Z" fill="#000"/><path d="M674.5 91 H682.5 L678.5 86 Z" fill="#000"/></svg>
<div style="position:absolute;left:363px;width:300px;text-align:right;top:79px;line-height:21px;white-space:nowrap;font-size:15.5px;color:#000">1.30</div>
<div style="position:absolute;left:465px;top:104px;width:150px;height:48px;background:linear-gradient(#e23838,#c01010 60%,#b00000)"></div>
<div style="position:absolute;left:617px;top:104px;width:150px;height:48px;background:linear-gradient(#e23838,#c01010 60%,#b00000)"></div>
<div style="position:absolute;left:487px;top:127px;line-height:20px;white-space:nowrap;font-size:17px;font-weight:bold;color:#fff">2730</div>
<div style="position:absolute;left:531px;top:104px;line-height:48px;white-space:nowrap;font-size:43.5px;color:#fff">30</div>
<div style="position:absolute;left:582px;top:109px;line-height:20px;white-space:nowrap;font-size:17.5px;font-weight:bold;color:#fff">8</div>
<div style="position:absolute;left:639px;top:127px;line-height:20px;white-space:nowrap;font-size:17px;font-weight:bold;color:#fff">2730</div>
<div style="position:absolute;left:681px;top:104px;line-height:48px;white-space:nowrap;font-size:43.5px;color:#fff">46</div>
<div style="position:absolute;left:734px;top:109px;line-height:20px;white-space:nowrap;font-size:17.5px;font-weight:bold;color:#fff">8</div>
<div style="position:absolute;left:458px;top:199px;width:1402px;height:33px;background:#f0f0f0"></div>
<div style="position:absolute;left:459px;top:199px;width:1401px;height:1px;background:#c8c8c8"></div>
<div style="position:absolute;left:459px;top:200px;width:1401px;height:1px;background:#000"></div>
<div style="position:absolute;left:461px;top:200px;width:135px;height:24px;background:#fff;border:1.5px solid #000;border-top:none"></div>
<div style="position:absolute;left:474px;top:202px;line-height:21px;white-space:nowrap;font-size:16px;color:#000">XAUUSDm,M1</div>
<div style="position:absolute;left:613px;top:202px;line-height:21px;white-space:nowrap;font-size:16px;color:#6e6e6e">USDCHF,H1</div>
<div style="position:absolute;left:716px;top:203px;width:1px;height:19px;background:#8a8a8a"></div>
<div style="position:absolute;left:731px;top:202px;line-height:21px;white-space:nowrap;font-size:16px;color:#6e6e6e">GBPUSD,H1</div>
<div style="position:absolute;left:832px;top:203px;width:1px;height:19px;background:#8a8a8a"></div>
<div style="position:absolute;left:847px;top:202px;line-height:21px;white-space:nowrap;font-size:16px;color:#6e6e6e">USDJPY,H1</div>
<div style="position:absolute;left:944px;top:203px;width:1px;height:19px;background:#8a8a8a"></div>
<div style="position:absolute;left:960px;top:202px;line-height:21px;white-space:nowrap;font-size:16px;color:#6e6e6e">Gold,H1</div>
<div style="position:absolute;left:1035px;top:203px;width:1px;height:19px;background:#8a8a8a"></div>
<div style="position:absolute;left:1051.5px;top:202px;line-height:21px;white-space:nowrap;font-size:16px;color:#6e6e6e">Gold,M1</div>
<div style="position:absolute;left:1130px;top:203px;width:1px;height:19px;background:#8a8a8a"></div>
<div style="position:absolute;left:1145.5px;top:202px;line-height:21px;white-space:nowrap;font-size:16px;color:#6e6e6e">Gold,M1</div>
<div style="position:absolute;left:1225px;top:203px;width:1px;height:19px;background:#8a8a8a"></div>
<div style="position:absolute;left:1240px;top:202px;line-height:21px;white-space:nowrap;font-size:16px;color:#6e6e6e">Gold,H1</div>
<div style="position:absolute;left:1316px;top:203px;width:1px;height:19px;background:#8a8a8a"></div>
<div style="position:absolute;left:1332px;top:202px;line-height:21px;white-space:nowrap;font-size:16px;color:#6e6e6e">Gold,H1</div>
<div style="position:absolute;left:1408px;top:203px;width:1px;height:19px;background:#8a8a8a"></div>
<div style="position:absolute;left:1423px;top:202px;line-height:21px;white-space:nowrap;font-size:16px;color:#6e6e6e">Gold,H1</div>
<div style="position:absolute;left:1500px;top:203px;width:1px;height:19px;background:#8a8a8a"></div>
<div style="position:absolute;left:1514px;top:202px;line-height:21px;white-space:nowrap;font-size:16px;color:#6e6e6e">Gold,H1</div>
<div style="position:absolute;left:1590px;top:203px;width:1px;height:19px;background:#8a8a8a"></div>
<div style="position:absolute;left:1605.5px;top:202px;line-height:21px;white-space:nowrap;font-size:16px;color:#6e6e6e">Gold,H1</div>
<div style="position:absolute;left:1682px;top:203px;width:1px;height:19px;background:#8a8a8a"></div>
<div style="position:absolute;left:1697px;top:202px;line-height:21px;white-space:nowrap;font-size:16px;color:#6e6e6e">Gold,H1</div>
<div style="position:absolute;left:1774px;top:203px;width:1px;height:19px;background:#8a8a8a"></div>
<div style="position:absolute;left:1790px;top:200px;width:30px;height:25px;overflow:hidden"><div style="position:absolute;left:0;top:2px;line-height:21px;font-size:16px;color:#6e6e6e">Gold</div></div>
<svg style="position:absolute;left:1832px;top:209px" width="10" height="11" viewBox="0 0 10 11"><path d="M8 1 V10 L2 5.5 Z" fill="#b0b0b0"/></svg>
<div style="position:absolute;left:458px;top:225px;width:1402px;height:1px;background:#e2e2e2"></div>
<div style="position:absolute;left:0px;top:226px;width:1860px;height:854px;background:#f0f0f0"></div>
<div style="position:absolute;left:21px;top:232px;width:1830px;height:1px;background:#a0a0a0"></div>
<div style="position:absolute;left:21px;top:232px;width:1px;height:848px;background:#a0a0a0"></div>
<div style="position:absolute;left:22px;top:233px;width:1829px;height:26px;background:#fff"></div>
<svg style="position:absolute;left:5px;top:233px" width="13" height="13" viewBox="0 0 13 13"><path d="M3 3 L10 10 M10 3 L3 10" stroke="#000" stroke-width="2.2"/></svg>
<div style="position:absolute;left:2px;top:251px;width:18px;height:829px;background:#b3c9e4"></div>
<div style="position:absolute;left:2px;top:1101px;transform-origin:0 0;transform:rotate(-90deg);font-size:15px;line-height:16px;color:#222;white-space:nowrap">工具箱</div>
<div style="position:absolute;left:27px;top:236px;line-height:21px;white-space:nowrap;font-size:15.5px;color:#000">时间</div>
<div style="position:absolute;left:48px;width:300px;text-align:right;top:236px;line-height:21px;white-space:nowrap;font-size:15.5px;color:#000">交易品种</div>
<div style="position:absolute;left:151.5px;width:300px;text-align:right;top:236px;line-height:21px;white-space:nowrap;font-size:15.5px;color:#000">订单号</div>
<div style="position:absolute;left:241.5px;width:300px;text-align:right;top:236px;line-height:21px;white-space:nowrap;font-size:15.5px;color:#000">类型</div>
<div style="position:absolute;left:391px;width:300px;text-align:right;top:236px;line-height:21px;white-space:nowrap;font-size:15.5px;color:#000">交易量</div>
<div style="position:absolute;left:541.5px;width:300px;text-align:right;top:236px;line-height:21px;white-space:nowrap;font-size:15.5px;color:#000">价位</div>
<div style="position:absolute;left:690.5px;width:300px;text-align:right;top:236px;line-height:21px;white-space:nowrap;font-size:15.5px;color:#000">止损</div>
<div style="position:absolute;left:840px;width:300px;text-align:right;top:236px;line-height:21px;white-space:nowrap;font-size:15.5px;color:#000">止盈</div>
<div style="position:absolute;left:989px;width:300px;text-align:right;top:236px;line-height:21px;white-space:nowrap;font-size:15.5px;color:#000">时间</div>
<div style="position:absolute;left:1172px;width:300px;text-align:right;top:236px;line-height:21px;white-space:nowrap;font-size:15.5px;color:#000">价位</div>
<div style="position:absolute;left:1415.5px;width:300px;text-align:right;top:236px;line-height:21px;white-space:nowrap;font-size:15.5px;color:#000">盈利</div>
<div style="position:absolute;left:1547px;width:300px;text-align:right;top:236px;line-height:21px;white-space:nowrap;font-size:15.5px;color:#000">变更</div>
<svg style="position:absolute;left:1304px;top:241px" width="12" height="8" viewBox="0 0 12 8"><path d="M1.5 6.5 H10.5 L6 1.5 Z" fill="#000"/></svg>
<div style="position:absolute;left:216px;top:233px;width:1px;height:26px;background:#e6e6e6"></div>
<div style="position:absolute;left:351px;top:233px;width:1px;height:26px;background:#e6e6e6"></div>
<div style="position:absolute;left:455px;top:233px;width:1px;height:26px;background:#e6e6e6"></div>
<div style="position:absolute;left:545px;top:233px;width:1px;height:26px;background:#e6e6e6"></div>
<div style="position:absolute;left:694px;top:233px;width:1px;height:26px;background:#e6e6e6"></div>
<div style="position:absolute;left:844px;top:233px;width:1px;height:26px;background:#e6e6e6"></div>
<div style="position:absolute;left:993px;top:233px;width:1px;height:26px;background:#e6e6e6"></div>
<div style="position:absolute;left:1143px;top:233px;width:1px;height:26px;background:#e6e6e6"></div>
<div style="position:absolute;left:1326px;top:233px;width:1px;height:26px;background:#e6e6e6"></div>
<div style="position:absolute;left:1475px;top:233px;width:1px;height:26px;background:#e6e6e6"></div>
<div style="position:absolute;left:1719px;top:233px;width:1px;height:26px;background:#e6e6e6"></div>
<div style="position:absolute;left:0;top:0;width:1860px;height:1076px;overflow:hidden"><div style="position:absolute;left:22px;top:259px;width:1829px;height:25px;background:#ebebeb"></div>
<div style="position:absolute;left:22px;top:284px;width:1829px;height:1px;background:#d5d5d5"></div>
<div style="position:absolute;left:216px;top:259px;width:1px;height:25px;background:#d9d9d9"></div>
<div style="position:absolute;left:351px;top:259px;width:1px;height:25px;background:#d9d9d9"></div>
<div style="position:absolute;left:455px;top:259px;width:1px;height:25px;background:#d9d9d9"></div>
<div style="position:absolute;left:545px;top:259px;width:1px;height:25px;background:#d9d9d9"></div>
<div style="position:absolute;left:694px;top:259px;width:1px;height:25px;background:#d9d9d9"></div>
<div style="position:absolute;left:844px;top:259px;width:1px;height:25px;background:#d9d9d9"></div>
<div style="position:absolute;left:993px;top:259px;width:1px;height:25px;background:#d9d9d9"></div>
<div style="position:absolute;left:1143px;top:259px;width:1px;height:25px;background:#d9d9d9"></div>
<div style="position:absolute;left:1326px;top:259px;width:1px;height:25px;background:#d9d9d9"></div>
<div style="position:absolute;left:1475px;top:259px;width:1px;height:25px;background:#d9d9d9"></div>
<div style="position:absolute;left:1719px;top:259px;width:1px;height:25px;background:#d9d9d9"></div>
<svg style="position:absolute;left:27px;top:261px" width="16" height="21" viewBox="0 0 16 21"><rect x="1.5" y="1.5" width="12.5" height="17.5" rx="2.2" fill="#fff" stroke="#1a69b0" stroke-width="2"/><path d="M6.2 6.8 H9.3 M6.2 10.8 H9.3" stroke="#1a69b0" stroke-width="1.7"/></svg>
<div style="position:absolute;left:50px;top:262px;line-height:21px;white-space:nowrap;font-size:16.5px;color:#000">2024.09.25 07:04:09</div>
<div style="position:absolute;left:47.5px;width:300px;text-align:right;top:262px;line-height:21px;white-space:nowrap;font-size:16.5px;color:#000">xauusdm</div>
<div style="position:absolute;left:151.3px;width:300px;text-align:right;top:262px;line-height:21px;white-space:nowrap;font-size:16.5px;color:#000;letter-spacing:0.3px">287135903</div>
<div style="position:absolute;left:241px;width:300px;text-align:right;top:262px;line-height:21px;white-space:nowrap;font-size:16.5px;color:#000">buy</div>
<div style="position:absolute;left:390.79999999999995px;width:300px;text-align:right;top:262px;line-height:21px;white-space:nowrap;font-size:16.5px;color:#000;letter-spacing:0.3px">1.2</div>
<div style="position:absolute;left:540.8px;width:300px;text-align:right;top:262px;line-height:21px;white-space:nowrap;font-size:16.5px;color:#000;letter-spacing:0.3px">2653.658</div>
<div style="position:absolute;left:1021.5px;width:300px;text-align:right;top:262px;line-height:21px;white-space:nowrap;font-size:16.5px;color:#000">2024.09.25 07:25:08</div>
<div style="position:absolute;left:1171.8px;width:300px;text-align:right;top:262px;line-height:21px;white-space:nowrap;font-size:16.5px;color:#000;letter-spacing:0.3px">2654.192</div>
<div style="position:absolute;left:1415px;width:300px;text-align:right;top:262px;line-height:21px;white-space:nowrap;font-size:16.5px;color:#0000ff">64.08</div>
<div style="position:absolute;left:1546.5px;width:300px;text-align:right;top:262px;line-height:21px;white-space:nowrap;font-size:16.5px;color:#0000ff">0.02 %</div>
<div style="position:absolute;left:22px;top:285px;width:1829px;height:25px;background:#ffffff"></div>
<div style="position:absolute;left:22px;top:310px;width:1829px;height:1px;background:#d5d5d5"></div>
<div style="position:absolute;left:216px;top:285px;width:1px;height:25px;background:#d9d9d9"></div>
<div style="position:absolute;left:351px;top:285px;width:1px;height:25px;background:#d9d9d9"></div>
<div style="position:absolute;left:455px;top:285px;width:1px;height:25px;background:#d9d9d9"></div>
<div style="position:absolute;left:545px;top:285px;width:1px;height:25px;background:#d9d9d9"></div>
<div style="position:absolute;left:694px;top:285px;width:1px;height:25px;background:#d9d9d9"></div>
<div style="position:absolute;left:844px;top:285px;width:1px;height:25px;background:#d9d9d9"></div>
<div style="position:absolute;left:993px;top:285px;width:1px;height:25px;background:#d9d9d9"></div>
<div style="position:absolute;left:1143px;top:285px;width:1px;height:25px;background:#d9d9d9"></div>
<div style="position:absolute;left:1326px;top:285px;width:1px;height:25px;background:#d9d9d9"></div>
<div style="position:absolute;left:1475px;top:285px;width:1px;height:25px;background:#d9d9d9"></div>
<div style="position:absolute;left:1719px;top:285px;width:1px;height:25px;background:#d9d9d9"></div>
<svg style="position:absolute;left:27px;top:287px" width="16" height="21" viewBox="0 0 16 21"><rect x="1.5" y="1.5" width="12.5" height="17.5" rx="2.2" fill="#fff" stroke="#1a69b0" stroke-width="2"/><path d="M6.2 6.8 H9.3 M6.2 10.8 H9.3" stroke="#1a69b0" stroke-width="1.7"/></svg>
<div style="position:absolute;left:50px;top:288px;line-height:21px;white-space:nowrap;font-size:16.5px;color:#000">2024.09.25 07:05:04</div>
<div style="position:absolute;left:47.5px;width:300px;text-align:right;top:288px;line-height:21px;white-space:nowrap;font-size:16.5px;color:#000">xauusdm</div>
<div style="position:absolute;left:151.3px;width:300px;text-align:right;top:288px;line-height:21px;white-space:nowrap;font-size:16.5px;color:#000;letter-spacing:0.3px">287015716</div>
<div style="position:absolute;left:241px;width:300px;text-align:right;top:288px;line-height:21px;white-space:nowrap;font-size:16.5px;color:#000">buy</div>
<div style="position:absolute;left:390.79999999999995px;width:300px;text-align:right;top:288px;line-height:21px;white-space:nowrap;font-size:16.5px;color:#000;letter-spacing:0.3px">1.2</div>
<div style="position:absolute;left:540.8px;width:300px;text-align:right;top:288px;line-height:21px;white-space:nowrap;font-size:16.5px;color:#000;letter-spacing:0.3px">2653.000</div>
<div style="position:absolute;left:1021.5px;width:300px;text-align:right;top:288px;line-height:21px;white-space:nowrap;font-size:16.5px;color:#000">2024.09.25 13:49:23</div>
<div style="position:absolute;left:1171.8px;width:300px;text-align:right;top:288px;line-height:21px;white-space:nowrap;font-size:16.5px;color:#000;letter-spacing:0.3px">2665.4115</div>
<div style="position:absolute;left:1415px;width:300px;text-align:right;top:288px;line-height:21px;white-space:nowrap;font-size:16.5px;color:#0000ff">1 489.38</div>
<div style="position:absolute;left:1546.5px;width:300px;text-align:right;top:288px;line-height:21px;white-space:nowrap;font-size:16.5px;color:#0000ff">0.47 %</div>
<div style="position:absolute;left:22px;top:311px;width:1829px;height:25px;background:#ebebeb"></div>
<div style="position:absolute;left:22px;top:336px;width:1829px;height:1px;background:#d5d5d5"></div>
<div style="position:absolute;left:216px;top:311px;width:1px;height:25px;background:#d9d9d9"></div>
<div style="position:absolute;left:351px;top:311px;width:1px;height:25px;background:#d9d9d9"></div>
<div style="position:absolute;left:455px;top:311px;width:1px;height:25px;background:#d9d9d9"></div>
<div style="position:absolute;left:545px;top:311px;width:1px;height:25px;background:#d9d9d9"></div>
<div style="position:absolute;left:694px;top:311px;width:1px;height:25px;background:#d9d9d9"></div>
<div style="position:absolute;left:844px;top:311px;width:1px;height:25px;background:#d9d9d9"></div>
<div style="position:absolute;left:993px;top:311px;width:1px;height:25px;background:#d9d9d9"></div>
<div style="position:absolute;left:1143px;top:311px;width:1px;height:25px;background:#d9d9d9"></div>
<div style="position:absolute;left:1326px;top:311px;width:1px;height:25px;background:#d9d9d9"></div>
<div style="position:absolute;left:1475px;top:311px;width:1px;height:25px;background:#d9d9d9"></div>
<div style="position:absolute;left:1719px;top:311px;width:1px;height:25px;background:#d9d9d9"></div>
<svg style="position:absolute;left:27px;top:313px" width="16" height="21" viewBox="0 0 16 21"><rect x="1.5" y="1.5" width="12.5" height="17.5" rx="2.2" fill="#fff" stroke="#e0403a" stroke-width="2"/><path d="M6.2 6.8 H9.3 M6.2 10.8 H9.3" stroke="#e0403a" stroke-width="1.7"/></svg>
<div style="position:absolute;left:50px;top:314px;line-height:21px;white-space:nowrap;font-size:16.5px;color:#000">2024.09.26 11:06:28</div>
<div style="position:absolute;left:47.5px;width:300px;text-align:right;top:314px;line-height:21px;white-space:nowrap;font-size:16.5px;color:#000">xauusdm</div>
<div style="position:absolute;left:151.3px;width:300px;text-align:right;top:314px;line-height:21px;white-space:nowrap;font-size:16.5px;color:#000;letter-spacing:0.3px">287820440</div>
<div style="position:absolute;left:241px;width:300px;text-align:right;top:314px;line-height:21px;white-space:nowrap;font-size:16.5px;color:#000">sell</div>
<div style="position:absolute;left:390.79999999999995px;width:300px;text-align:right;top:314px;line-height:21px;white-space:nowrap;font-size:16.5px;color:#000;letter-spacing:0.3px">1</div>
<div style="position:absolute;left:540.8px;width:300px;text-align:right;top:314px;line-height:21px;white-space:nowrap;font-size:16.5px;color:#000;letter-spacing:0.3px">2678.000</div>
<div style="position:absolute;left:1021.5px;width:300px;text-align:right;top:314px;line-height:21px;white-space:nowrap;font-size:16.5px;color:#000">2024.09.26 12:14:22</div>
<div style="position:absolute;left:1171.8px;width:300px;text-align:right;top:314px;line-height:21px;white-space:nowrap;font-size:16.5px;color:#000;letter-spacing:0.3px">2676.823</div>
<div style="position:absolute;left:1415px;width:300px;text-align:right;top:314px;line-height:21px;white-space:nowrap;font-size:16.5px;color:#0000ff">117.70</div>
<div style="position:absolute;left:1546.5px;width:300px;text-align:right;top:314px;line-height:21px;white-space:nowrap;font-size:16.5px;color:#0000ff">0.04 %</div>
<div style="position:absolute;left:22px;top:337px;width:1829px;height:25px;background:#ffffff"></div>
<div style="position:absolute;left:22px;top:362px;width:1829px;height:1px;background:#d5d5d5"></div>
<div style="position:absolute;left:216px;top:337px;width:1px;height:25px;background:#d9d9d9"></div>
<div style="position:absolute;left:351px;top:337px;width:1px;height:25px;background:#d9d9d9"></div>
<div style="position:absolute;left:455px;top:337px;width:1px;height:25px;background:#d9d9d9"></div>
<div style="position:absolute;left:545px;top:337px;width:1px;height:25px;background:#d9d9d9"></div>
<div style="position:absolute;left:694px;top:337px;width:1px;height:25px;background:#d9d9d9"></div>
<div style="position:absolute;left:844px;top:337px;width:1px;height:25px;background:#d9d9d9"></div>
<div style="position:absolute;left:993px;top:337px;width:1px;height:25px;background:#d9d9d9"></div>
<div style="position:absolute;left:1143px;top:337px;width:1px;height:25px;background:#d9d9d9"></div>
<div style="position:absolute;left:1326px;top:337px;width:1px;height:25px;background:#d9d9d9"></div>
<div style="position:absolute;left:1475px;top:337px;width:1px;height:25px;background:#d9d9d9"></div>
<div style="position:absolute;left:1719px;top:337px;width:1px;height:25px;background:#d9d9d9"></div>
<svg style="position:absolute;left:27px;top:339px" width="16" height="21" viewBox="0 0 16 21"><rect x="1.5" y="1.5" width="12.5" height="17.5" rx="2.2" fill="#fff" stroke="#e0403a" stroke-width="2"/><path d="M6.2 6.8 H9.3 M6.2 10.8 H9.3" stroke="#e0403a" stroke-width="1.7"/></svg>
<div style="position:absolute;left:50px;top:340px;line-height:21px;white-space:nowrap;font-size:16.5px;color:#000">2024.09.26 10:20:39</div>
<div style="position:absolute;left:47.5px;width:300px;text-align:right;top:340px;line-height:21px;white-space:nowrap;font-size:16.5px;color:#000">xauusdm</div>
<div style="position:absolute;left:151.3px;width:300px;text-align:right;top:340px;line-height:21px;white-space:nowrap;font-size:16.5px;color:#000;letter-spacing:0.3px">287820301</div>
<div style="position:absolute;left:241px;width:300px;text-align:right;top:340px;line-height:21px;white-space:nowrap;font-size:16.5px;color:#000">sell</div>
<div style="position:absolute;left:390.79999999999995px;width:300px;text-align:right;top:340px;line-height:21px;white-space:nowrap;font-size:16.5px;color:#000;letter-spacing:0.3px">1</div>
<div style="position:absolute;left:540.8px;width:300px;text-align:right;top:340px;line-height:21px;white-space:nowrap;font-size:16.5px;color:#000;letter-spacing:0.3px">2673.000</div>
<div style="position:absolute;left:1021.5px;width:300px;text-align:right;top:340px;line-height:21px;white-space:nowrap;font-size:16.5px;color:#000">2024.09.26 13:33:47</div>
<div style="position:absolute;left:1171.8px;width:300px;text-align:right;top:340px;line-height:21px;white-space:nowrap;font-size:16.5px;color:#000;letter-spacing:0.3px">2664.780</div>
<div style="position:absolute;left:1415px;width:300px;text-align:right;top:340px;line-height:21px;white-space:nowrap;font-size:16.5px;color:#0000ff">822.00</div>
<div style="position:absolute;left:1546.5px;width:300px;text-align:right;top:340px;line-height:21px;white-space:nowrap;font-size:16.5px;color:#0000ff">0.31 %</div>
<div style="position:absolute;left:22px;top:363px;width:1829px;height:25px;background:#0078d7"></div>
<div style="position:absolute;left:22px;top:388px;width:1829px;height:1px;background:#d5d5d5"></div>
<div style="position:absolute;left:216px;top:363px;width:1px;height:25px;background:#6fa8dc"></div>
<div style="position:absolute;left:351px;top:363px;width:1px;height:25px;background:#6fa8dc"></div>
<div style="position:absolute;left:455px;top:363px;width:1px;height:25px;background:#6fa8dc"></div>
<div style="position:absolute;left:545px;top:363px;width:1px;height:25px;background:#6fa8dc"></div>
<div style="position:absolute;left:694px;top:363px;width:1px;height:25px;background:#6fa8dc"></div>
<div style="position:absolute;left:844px;top:363px;width:1px;height:25px;background:#6fa8dc"></div>
<div style="position:absolute;left:993px;top:363px;width:1px;height:25px;background:#6fa8dc"></div>
<div style="position:absolute;left:1143px;top:363px;width:1px;height:25px;background:#6fa8dc"></div>
<div style="position:absolute;left:1326px;top:363px;width:1px;height:25px;background:#6fa8dc"></div>
<div style="position:absolute;left:1475px;top:363px;width:1px;height:25px;background:#6fa8dc"></div>
<div style="position:absolute;left:1719px;top:363px;width:1px;height:25px;background:#6fa8dc"></div>
<svg style="position:absolute;left:27px;top:365px" width="16" height="21" viewBox="0 0 16 21"><rect x="1.5" y="1.5" width="12.5" height="17.5" rx="2.2" fill="#fff" stroke="#e0403a" stroke-width="2"/><path d="M6.2 6.8 H9.3 M6.2 10.8 H9.3" stroke="#e0403a" stroke-width="1.7"/></svg>
<div style="position:absolute;left:50px;top:366px;line-height:21px;white-space:nowrap;font-size:16.5px;color:#fff">2024.09.26 10:47:48</div>
<div style="position:absolute;left:47.5px;width:300px;text-align:right;top:366px;line-height:21px;white-space:nowrap;font-size:16.5px;color:#fff">xauusdm</div>
<div style="position:absolute;left:151.3px;width:300px;text-align:right;top:366px;line-height:21px;white-space:nowrap;font-size:16.5px;color:#fff;letter-spacing:0.3px">287820351</div>
<div style="position:absolute;left:241px;width:300px;text-align:right;top:366px;line-height:21px;white-space:nowrap;font-size:16.5px;color:#fff">sell</div>
<div style="position:absolute;left:390.79999999999995px;width:300px;text-align:right;top:366px;line-height:21px;white-space:nowrap;font-size:16.5px;color:#fff;letter-spacing:0.3px">1</div>
<div style="position:absolute;left:540.8px;width:300px;text-align:right;top:366px;line-height:21px;white-space:nowrap;font-size:16.5px;color:#fff;letter-spacing:0.3px">2675.000</div>
<div style="position:absolute;left:1021.5px;width:300px;text-align:right;top:366px;line-height:21px;white-space:nowrap;font-size:16.5px;color:#fff">2024.09.26 13:33:50</div>
<div style="position:absolute;left:1171.8px;width:300px;text-align:right;top:366px;line-height:21px;white-space:nowrap;font-size:16.5px;color:#fff;letter-spacing:0.3px">2664.786</div>
<div style="position:absolute;left:1415px;width:300px;text-align:right;top:366px;line-height:21px;white-space:nowrap;font-size:16.5px;color:#fff">1 021.40</div>
<div style="position:absolute;left:1546.5px;width:300px;text-align:right;top:366px;line-height:21px;white-space:nowrap;font-size:16.5px;color:#fff">0.38 %</div>
<div style="position:absolute;left:22px;top:389px;width:1829px;height:25px;background:#ffffff"></div>
<div style="position:absolute;left:22px;top:414px;width:1829px;height:1px;background:#d5d5d5"></div>
<div style="position:absolute;left:216px;top:389px;width:1px;height:25px;background:#d9d9d9"></div>
<div style="position:absolute;left:351px;top:389px;width:1px;height:25px;background:#d9d9d9"></div>
<div style="position:absolute;left:455px;top:389px;width:1px;height:25px;background:#d9d9d9"></div>
<div style="position:absolute;left:545px;top:389px;width:1px;height:25px;background:#d9d9d9"></div>
<div style="position:absolute;left:694px;top:389px;width:1px;height:25px;background:#d9d9d9"></div>
<div style="position:absolute;left:844px;top:389px;width:1px;height:25px;background:#d9d9d9"></div>
<div style="position:absolute;left:993px;top:389px;width:1px;height:25px;background:#d9d9d9"></div>
<div style="position:absolute;left:1143px;top:389px;width:1px;height:25px;background:#d9d9d9"></div>
<div style="position:absolute;left:1326px;top:389px;width:1px;height:25px;background:#d9d9d9"></div>
<div style="position:absolute;left:1475px;top:389px;width:1px;height:25px;background:#d9d9d9"></div>
<div style="position:absolute;left:1719px;top:389px;width:1px;height:25px;background:#d9d9d9"></div>
<svg style="position:absolute;left:27px;top:391px" width="16" height="21" viewBox="0 0 16 21"><rect x="1.5" y="1.5" width="12.5" height="17.5" rx="2.2" fill="#fff" stroke="#e0403a" stroke-width="2"/><path d="M6.2 6.8 H9.3 M6.2 10.8 H9.3" stroke="#e0403a" stroke-width="1.7"/></svg>
<div style="position:absolute;left:50px;top:392px;line-height:21px;white-space:nowrap;font-size:16.5px;color:#000">2024.09.26 03:41:29</div>
<div style="position:absolute;left:47.5px;width:300px;text-align:right;top:392px;line-height:21px;white-space:nowrap;font-size:16.5px;color:#000">xauusdm</div>
<div style="position:absolute;left:151.3px;width:300px;text-align:right;top:392px;line-height:21px;white-space:nowrap;font-size:16.5px;color:#000;letter-spacing:0.3px">287662823</div>
<div style="position:absolute;left:241px;width:300px;text-align:right;top:392px;line-height:21px;white-space:nowrap;font-size:16.5px;color:#000">sell</div>
<div style="position:absolute;left:390.79999999999995px;width:300px;text-align:right;top:392px;line-height:21px;white-space:nowrap;font-size:16.5px;color:#000;letter-spacing:0.3px">1</div>
<div style="position:absolute;left:540.8px;width:300px;text-align:right;top:392px;line-height:21px;white-space:nowrap;font-size:16.5px;color:#000;letter-spacing:0.3px">2661.086</div>
<div style="position:absolute;left:1021.5px;width:300px;text-align:right;top:392px;line-height:21px;white-space:nowrap;font-size:16.5px;color:#000">2024.09.26 13:33:53</div>
<div style="position:absolute;left:1171.8px;width:300px;text-align:right;top:392px;line-height:21px;white-space:nowrap;font-size:16.5px;color:#000;letter-spacing:0.3px">2664.514</div>
<div style="position:absolute;left:1415px;width:300px;text-align:right;top:392px;line-height:21px;white-space:nowrap;font-size:16.5px;color:#ff0000">-342.80</div>
<div style="position:absolute;left:1546.5px;width:300px;text-align:right;top:392px;line-height:21px;white-space:nowrap;font-size:16.5px;color:#ff0000">-0.13 %</div>
<div style="position:absolute;left:22px;top:415px;width:1829px;height:25px;background:#ebebeb"></div>
<div style="position:absolute;left:22px;top:440px;width:1829px;height:1px;background:#d5d5d5"></div>
<div style="position:absolute;left:216px;top:415px;width:1px;height:25px;background:#d9d9d9"></div>
<div style="position:absolute;left:351px;top:415px;width:1px;height:25px;background:#d9d9d9"></div>
<div style="position:absolute;left:455px;top:415px;width:1px;height:25px;background:#d9d9d9"></div>
<div style="position:absolute;left:545px;top:415px;width:1px;height:25px;background:#d9d9d9"></div>
<div style="position:absolute;left:694px;top:415px;width:1px;height:25px;background:#d9d9d9"></div>
<div style="position:absolute;left:844px;top:415px;width:1px;height:25px;background:#d9d9d9"></div>
<div style="position:absolute;left:993px;top:415px;width:1px;height:25px;background:#d9d9d9"></div>
<div style="position:absolute;left:1143px;top:415px;width:1px;height:25px;background:#d9d9d9"></div>
<div style="position:absolute;left:1326px;top:415px;width:1px;height:25px;background:#d9d9d9"></div>
<div style="position:absolute;left:1475px;top:415px;width:1px;height:25px;background:#d9d9d9"></div>
<div style="position:absolute;left:1719px;top:415px;width:1px;height:25px;background:#d9d9d9"></div>
<svg style="position:absolute;left:27px;top:417px" width="16" height="21" viewBox="0 0 16 21"><rect x="1.5" y="1.5" width="12.5" height="17.5" rx="2.2" fill="#fff" stroke="#1a69b0" stroke-width="2"/><path d="M6.2 6.8 H9.3 M6.2 10.8 H9.3" stroke="#1a69b0" stroke-width="1.7"/></svg>
<div style="position:absolute;left:50px;top:418px;line-height:21px;white-space:nowrap;font-size:16.5px;color:#000">2024.09.27 05:40:07</div>
<div style="position:absolute;left:47.5px;width:300px;text-align:right;top:418px;line-height:21px;white-space:nowrap;font-size:16.5px;color:#000">xauusdm</div>
<div style="position:absolute;left:151.3px;width:300px;text-align:right;top:418px;line-height:21px;white-space:nowrap;font-size:16.5px;color:#000;letter-spacing:0.3px">288409640</div>
<div style="position:absolute;left:241px;width:300px;text-align:right;top:418px;line-height:21px;white-space:nowrap;font-size:16.5px;color:#000">buy</div>
<div style="position:absolute;left:390.79999999999995px;width:300px;text-align:right;top:418px;line-height:21px;white-space:nowrap;font-size:16.5px;color:#000;letter-spacing:0.3px">0.1</div>
<div style="position:absolute;left:540.8px;width:300px;text-align:right;top:418px;line-height:21px;white-space:nowrap;font-size:16.5px;color:#000;letter-spacing:0.3px">2663.443</div>
<div style="position:absolute;left:1021.5px;width:300px;text-align:right;top:418px;line-height:21px;white-space:nowrap;font-size:16.5px;color:#000">2024.09.27 05:40:12</div>
<div style="position:absolute;left:1171.8px;width:300px;text-align:right;top:418px;line-height:21px;white-space:nowrap;font-size:16.5px;color:#000;letter-spacing:0.3px">2663.241</div>
<div style="position:absolute;left:1415px;width:300px;text-align:right;top:418px;line-height:21px;white-space:nowrap;font-size:16.5px;color:#ff0000">-2.02</div>
<div style="position:absolute;left:1546.5px;width:300px;text-align:right;top:418px;line-height:21px;white-space:nowrap;font-size:16.5px;color:#ff0000">-0.01 %</div>
<div style="position:absolute;left:22px;top:441px;width:1829px;height:26px;background:#ffffff"></div>
<div style="position:absolute;left:22px;top:467px;width:1829px;height:1px;background:#d5d5d5"></div>
<div style="position:absolute;left:216px;top:441px;width:1px;height:26px;background:#d9d9d9"></div>
<div style="position:absolute;left:351px;top:441px;width:1px;height:26px;background:#d9d9d9"></div>
<div style="position:absolute;left:455px;top:441px;width:1px;height:26px;background:#d9d9d9"></div>
<div style="position:absolute;left:545px;top:441px;width:1px;height:26px;background:#d9d9d9"></div>
<div style="position:absolute;left:694px;top:441px;width:1px;height:26px;background:#d9d9d9"></div>
<div style="position:absolute;left:844px;top:441px;width:1px;height:26px;background:#d9d9d9"></div>
<div style="position:absolute;left:993px;top:441px;width:1px;height:26px;background:#d9d9d9"></div>
<div style="position:absolute;left:1143px;top:441px;width:1px;height:26px;background:#d9d9d9"></div>
<div style="position:absolute;left:1326px;top:441px;width:1px;height:26px;background:#d9d9d9"></div>
<div style="position:absolute;left:1475px;top:441px;width:1px;height:26px;background:#d9d9d9"></div>
<div style="position:absolute;left:1719px;top:441px;width:1px;height:26px;background:#d9d9d9"></div>
<svg style="position:absolute;left:27px;top:443px" width="16" height="21" viewBox="0 0 16 21"><rect x="1.5" y="1.5" width="12.5" height="17.5" rx="2.2" fill="#fff" stroke="#1a69b0" stroke-width="2"/><path d="M6.2 6.8 H9.3 M6.2 10.8 H9.3" stroke="#1a69b0" stroke-width="1.7"/></svg>
<div style="position:absolute;left:50px;top:444px;line-height:21px;white-space:nowrap;font-size:16.5px;color:#000">2024.09.27 05:40:19</div>
<div style="position:absolute;left:47.5px;width:300px;text-align:right;top:444px;line-height:21px;white-space:nowrap;font-size:16.5px;color:#000">xauusdm</div>
<div style="position:absolute;left:151.3px;width:300px;text-align:right;top:444px;line-height:21px;white-space:nowrap;font-size:16.5px;color:#000;letter-spacing:0.3px">288409790</div>
<div style="position:absolute;left:241px;width:300px;text-align:right;top:444px;line-height:21px;white-space:nowrap;font-size:16.5px;color:#000">buy</div>
<div style="position:absolute;left:390.79999999999995px;width:300px;text-align:right;top:444px;line-height:21px;white-space:nowrap;font-size:16.5px;color:#000;letter-spacing:0.3px">1.3</div>
<div style="position:absolute;left:540.8px;width:300px;text-align:right;top:444px;line-height:21px;white-space:nowrap;font-size:16.5px;color:#000;letter-spacing:0.3px">2663.634</div>
<div style="position:absolute;left:1021.5px;width:300px;text-align:right;top:444px;line-height:21px;white-space:nowrap;font-size:16.5px;color:#000">2024.09.27 10:39:00</div>
<div style="position:absolute;left:1171.8px;width:300px;text-align:right;top:444px;line-height:21px;white-space:nowrap;font-size:16.5px;color:#000;letter-spacing:0.3px">2664.944</div>
<div style="position:absolute;left:1415px;width:300px;text-align:right;top:444px;line-height:21px;white-space:nowrap;font-size:16.5px;color:#0000ff">170.30</div>
<div style="position:absolute;left:1546.5px;width:300px;text-align:right;top:444px;line-height:21px;white-space:nowrap;font-size:16.5px;color:#0000ff">0.05 %</div>
<div style="position:absolute;left:22px;top:468px;width:1829px;height:25px;background:#ebebeb"></div>
<div style="position:absolute;left:22px;top:493px;width:1829px;height:1px;background:#d5d5d5"></div>
<div style="position:absolute;left:216px;top:468px;width:1px;height:25px;background:#d9d9d9"></div>
<div style="position:absolute;left:351px;top:468px;width:1px;height:25px;background:#d9d9d9"></div>
<div style="position:absolute;left:455px;top:468px;width:1px;height:25px;background:#d9d9d9"></div>
<div style="position:absolute;left:545px;top:468px;width:1px;height:25px;background:#d9d9d9"></div>
<div style="position:absolute;left:694px;top:468px;width:1px;height:25px;background:#d9d9d9"></div>
<div style="position:absolute;left:844px;top:468px;width:1px;height:25px;background:#d9d9d9"></div>
<div style="position:absolute;left:993px;top:468px;width:1px;height:25px;background:#d9d9d9"></div>
<div style="position:absolute;left:1143px;top:468px;width:1px;height:25px;background:#d9d9d9"></div>
<div style="position:absolute;left:1326px;top:468px;width:1px;height:25px;background:#d9d9d9"></div>
<div style="position:absolute;left:1475px;top:468px;width:1px;height:25px;background:#d9d9d9"></div>
<div style="position:absolute;left:1719px;top:468px;width:1px;height:25px;background:#d9d9d9"></div>
<svg style="position:absolute;left:27px;top:470px" width="16" height="21" viewBox="0 0 16 21"><rect x="1.5" y="1.5" width="12.5" height="17.5" rx="2.2" fill="#fff" stroke="#1a69b0" stroke-width="2"/><path d="M6.2 6.8 H9.3 M6.2 10.8 H9.3" stroke="#1a69b0" stroke-width="1.7"/></svg>
<div style="position:absolute;left:50px;top:471px;line-height:21px;white-space:nowrap;font-size:16.5px;color:#000">2024.09.27 14:57:52</div>
<div style="position:absolute;left:47.5px;width:300px;text-align:right;top:471px;line-height:21px;white-space:nowrap;font-size:16.5px;color:#000">xauusdm</div>
<div style="position:absolute;left:151.3px;width:300px;text-align:right;top:471px;line-height:21px;white-space:nowrap;font-size:16.5px;color:#000;letter-spacing:0.3px">288053941</div>
<div style="position:absolute;left:241px;width:300px;text-align:right;top:471px;line-height:21px;white-space:nowrap;font-size:16.5px;color:#000">buy</div>
<div style="position:absolute;left:390.79999999999995px;width:300px;text-align:right;top:471px;line-height:21px;white-space:nowrap;font-size:16.5px;color:#000;letter-spacing:0.3px">1</div>
<div style="position:absolute;left:540.8px;width:300px;text-align:right;top:471px;line-height:21px;white-space:nowrap;font-size:16.5px;color:#000;letter-spacing:0.3px">2653.000</div>
<div style="position:absolute;left:1021.5px;width:300px;text-align:right;top:471px;line-height:21px;white-space:nowrap;font-size:16.5px;color:#000">2024.09.30 00:45:40</div>
<div style="position:absolute;left:1171.8px;width:300px;text-align:right;top:471px;line-height:21px;white-space:nowrap;font-size:16.5px;color:#000;letter-spacing:0.3px">2663.162</div>
<div style="position:absolute;left:1415px;width:300px;text-align:right;top:471px;line-height:21px;white-space:nowrap;font-size:16.5px;color:#0000ff">1 016.20</div>
<div style="position:absolute;left:1546.5px;width:300px;text-align:right;top:471px;line-height:21px;white-space:nowrap;font-size:16.5px;color:#0000ff">0.38 %</div>
<div style="position:absolute;left:22px;top:494px;width:1829px;height:25px;background:#ffffff"></div>
<div style="position:absolute;left:22px;top:519px;width:1829px;height:1px;background:#d5d5d5"></div>
<div style="position:absolute;left:216px;top:494px;width:1px;height:25px;background:#d9d9d9"></div>
<div style="position:absolute;left:351px;top:494px;width:1px;height:25px;background:#d9d9d9"></div>
<div style="position:absolute;left:455px;top:494px;width:1px;height:25px;background:#d9d9d9"></div>
<div style="position:absolute;left:545px;top:494px;width:1px;height:25px;background:#d9d9d9"></div>
<div style="position:absolute;left:694px;top:494px;width:1px;height:25px;background:#d9d9d9"></div>
<div style="position:absolute;left:844px;top:494px;width:1px;height:25px;background:#d9d9d9"></div>
<div style="position:absolute;left:993px;top:494px;width:1px;height:25px;background:#d9d9d9"></div>
<div style="position:absolute;left:1143px;top:494px;width:1px;height:25px;background:#d9d9d9"></div>
<div style="position:absolute;left:1326px;top:494px;width:1px;height:25px;background:#d9d9d9"></div>
<div style="position:absolute;left:1475px;top:494px;width:1px;height:25px;background:#d9d9d9"></div>
<div style="position:absolute;left:1719px;top:494px;width:1px;height:25px;background:#d9d9d9"></div>
<svg style="position:absolute;left:27px;top:496px" width="16" height="21" viewBox="0 0 16 21"><rect x="1.5" y="1.5" width="12.5" height="17.5" rx="2.2" fill="#fff" stroke="#1a69b0" stroke-width="2"/><path d="M6.2 6.8 H9.3 M6.2 10.8 H9.3" stroke="#1a69b0" stroke-width="1.7"/></svg>
<div style="position:absolute;left:50px;top:497px;line-height:21px;white-space:nowrap;font-size:16.5px;color:#000">2024.09.27 14:59:30</div>
<div style="position:absolute;left:47.5px;width:300px;text-align:right;top:497px;line-height:21px;white-space:nowrap;font-size:16.5px;color:#000">xauusdm</div>
<div style="position:absolute;left:151.3px;width:300px;text-align:right;top:497px;line-height:21px;white-space:nowrap;font-size:16.5px;color:#000;letter-spacing:0.3px">288054519</div>
<div style="position:absolute;left:241px;width:300px;text-align:right;top:497px;line-height:21px;white-space:nowrap;font-size:16.5px;color:#000">buy</div>
<div style="position:absolute;left:390.79999999999995px;width:300px;text-align:right;top:497px;line-height:21px;white-space:nowrap;font-size:16.5px;color:#000;letter-spacing:0.3px">1</div>
<div style="position:absolute;left:540.8px;width:300px;text-align:right;top:497px;line-height:21px;white-space:nowrap;font-size:16.5px;color:#000;letter-spacing:0.3px">2650.000</div>
<div style="position:absolute;left:1021.5px;width:300px;text-align:right;top:497px;line-height:21px;white-space:nowrap;font-size:16.5px;color:#000">2024.09.30 00:45:43</div>
<div style="position:absolute;left:1171.8px;width:300px;text-align:right;top:497px;line-height:21px;white-space:nowrap;font-size:16.5px;color:#000;letter-spacing:0.3px">2663.133</div>
<div style="position:absolute;left:1415px;width:300px;text-align:right;top:497px;line-height:21px;white-space:nowrap;font-size:16.5px;color:#0000ff">1 313.30</div>
<div style="position:absolute;left:1546.5px;width:300px;text-align:right;top:497px;line-height:21px;white-space:nowrap;font-size:16.5px;color:#0000ff">0.50 %</div>
<div style="position:absolute;left:22px;top:520px;width:1829px;height:25px;background:#ebebeb"></div>
<div style="position:absolute;left:22px;top:545px;width:1829px;height:1px;background:#d5d5d5"></div>
<div style="position:absolute;left:216px;top:520px;width:1px;height:25px;background:#d9d9d9"></div>
<div style="position:absolute;left:351px;top:520px;width:1px;height:25px;background:#d9d9d9"></div>
<div style="position:absolute;left:455px;top:520px;width:1px;height:25px;background:#d9d9d9"></div>
<div style="position:absolute;left:545px;top:520px;width:1px;height:25px;background:#d9d9d9"></div>
<div style="position:absolute;left:694px;top:520px;width:1px;height:25px;background:#d9d9d9"></div>
<div style="position:absolute;left:844px;top:520px;width:1px;height:25px;background:#d9d9d9"></div>
<div style="position:absolute;left:993px;top:520px;width:1px;height:25px;background:#d9d9d9"></div>
<div style="position:absolute;left:1143px;top:520px;width:1px;height:25px;background:#d9d9d9"></div>
<div style="position:absolute;left:1326px;top:520px;width:1px;height:25px;background:#d9d9d9"></div>
<div style="position:absolute;left:1475px;top:520px;width:1px;height:25px;background:#d9d9d9"></div>
<div style="position:absolute;left:1719px;top:520px;width:1px;height:25px;background:#d9d9d9"></div>
<svg style="position:absolute;left:27px;top:522px" width="16" height="21" viewBox="0 0 16 21"><rect x="1.5" y="1.5" width="12.5" height="17.5" rx="2.2" fill="#fff" stroke="#1a69b0" stroke-width="2"/><path d="M6.2 6.8 H9.3 M6.2 10.8 H9.3" stroke="#1a69b0" stroke-width="1.7"/></svg>
<div style="position:absolute;left:50px;top:523px;line-height:21px;white-space:nowrap;font-size:16.5px;color:#000">2024.09.27 07:29:29</div>
<div style="position:absolute;left:47.5px;width:300px;text-align:right;top:523px;line-height:21px;white-space:nowrap;font-size:16.5px;color:#000">xauusdm</div>
<div style="position:absolute;left:151.3px;width:300px;text-align:right;top:523px;line-height:21px;white-space:nowrap;font-size:16.5px;color:#000;letter-spacing:0.3px">288412005</div>
<div style="position:absolute;left:241px;width:300px;text-align:right;top:523px;line-height:21px;white-space:nowrap;font-size:16.5px;color:#000">buy</div>
<div style="position:absolute;left:390.79999999999995px;width:300px;text-align:right;top:523px;line-height:21px;white-space:nowrap;font-size:16.5px;color:#000;letter-spacing:0.3px">1</div>
<div style="position:absolute;left:540.8px;width:300px;text-align:right;top:523px;line-height:21px;white-space:nowrap;font-size:16.5px;color:#000;letter-spacing:0.3px">2661.607</div>
<div style="position:absolute;left:1021.5px;width:300px;text-align:right;top:523px;line-height:21px;white-space:nowrap;font-size:16.5px;color:#000">2024.09.30 00:45:47</div>
<div style="position:absolute;left:1171.8px;width:300px;text-align:right;top:523px;line-height:21px;white-space:nowrap;font-size:16.5px;color:#000;letter-spacing:0.3px">2663.096</div>
<div style="position:absolute;left:1415px;width:300px;text-align:right;top:523px;line-height:21px;white-space:nowrap;font-size:16.5px;color:#0000ff">148.90</div>
<div style="position:absolute;left:1546.5px;width:300px;text-align:right;top:523px;line-height:21px;white-space:nowrap;font-size:16.5px;color:#0000ff">0.06 %</div>
<div style="position:absolute;left:22px;top:546px;width:1829px;height:25px;background:#ffffff"></div>
<div style="position:absolute;left:22px;top:571px;width:1829px;height:1px;background:#d5d5d5"></div>
<div style="position:absolute;left:216px;top:546px;width:1px;height:25px;background:#d9d9d9"></div>
<div style="position:absolute;left:351px;top:546px;width:1px;height:25px;background:#d9d9d9"></div>
<div style="position:absolute;left:455px;top:546px;width:1px;height:25px;background:#d9d9d9"></div>
<div style="position:absolute;left:545px;top:546px;width:1px;height:25px;background:#d9d9d9"></div>
<div style="position:absolute;left:694px;top:546px;width:1px;height:25px;background:#d9d9d9"></div>
<div style="position:absolute;left:844px;top:546px;width:1px;height:25px;background:#d9d9d9"></div>
<div style="position:absolute;left:993px;top:546px;width:1px;height:25px;background:#d9d9d9"></div>
<div style="position:absolute;left:1143px;top:546px;width:1px;height:25px;background:#d9d9d9"></div>
<div style="position:absolute;left:1326px;top:546px;width:1px;height:25px;background:#d9d9d9"></div>
<div style="position:absolute;left:1475px;top:546px;width:1px;height:25px;background:#d9d9d9"></div>
<div style="position:absolute;left:1719px;top:546px;width:1px;height:25px;background:#d9d9d9"></div>
<svg style="position:absolute;left:27px;top:548px" width="16" height="21" viewBox="0 0 16 21"><rect x="1.5" y="1.5" width="12.5" height="17.5" rx="2.2" fill="#fff" stroke="#1a69b0" stroke-width="2"/><path d="M6.2 6.8 H9.3 M6.2 10.8 H9.3" stroke="#1a69b0" stroke-width="1.7"/></svg>
<div style="position:absolute;left:50px;top:549px;line-height:21px;white-space:nowrap;font-size:16.5px;color:#000">2024.09.27 14:48:44</div>
<div style="position:absolute;left:47.5px;width:300px;text-align:right;top:549px;line-height:21px;white-space:nowrap;font-size:16.5px;color:#000">xauusdm</div>
<div style="position:absolute;left:151.3px;width:300px;text-align:right;top:549px;line-height:21px;white-space:nowrap;font-size:16.5px;color:#000;letter-spacing:0.3px">288412140</div>
<div style="position:absolute;left:241px;width:300px;text-align:right;top:549px;line-height:21px;white-space:nowrap;font-size:16.5px;color:#000">buy</div>
<div style="position:absolute;left:390.79999999999995px;width:300px;text-align:right;top:549px;line-height:21px;white-space:nowrap;font-size:16.5px;color:#000;letter-spacing:0.3px">1</div>
<div style="position:absolute;left:540.8px;width:300px;text-align:right;top:549px;line-height:21px;white-space:nowrap;font-size:16.5px;color:#000;letter-spacing:0.3px">2657.000</div>
<div style="position:absolute;left:1021.5px;width:300px;text-align:right;top:549px;line-height:21px;white-space:nowrap;font-size:16.5px;color:#000">2024.09.30 00:45:53</div>
<div style="position:absolute;left:1171.8px;width:300px;text-align:right;top:549px;line-height:21px;white-space:nowrap;font-size:16.5px;color:#000;letter-spacing:0.3px">2662.930</div>
<div style="position:absolute;left:1415px;width:300px;text-align:right;top:549px;line-height:21px;white-space:nowrap;font-size:16.5px;color:#0000ff">593.00</div>
<div style="position:absolute;left:1546.5px;width:300px;text-align:right;top:549px;line-height:21px;white-space:nowrap;font-size:16.5px;color:#0000ff">0.22 %</div>
<div style="position:absolute;left:22px;top:572px;width:1829px;height:25px;background:#ebebeb"></div>
<div style="position:absolute;left:22px;top:597px;width:1829px;height:1px;background:#d5d5d5"></div>
<div style="position:absolute;left:216px;top:572px;width:1px;height:25px;background:#d9d9d9"></div>
<div style="position:absolute;left:351px;top:572px;width:1px;height:25px;background:#d9d9d9"></div>
<div style="position:absolute;left:455px;top:572px;width:1px;height:25px;background:#d9d9d9"></div>
<div style="position:absolute;left:545px;top:572px;width:1px;height:25px;background:#d9d9d9"></div>
<div style="position:absolute;left:694px;top:572px;width:1px;height:25px;background:#d9d9d9"></div>
<div style="position:absolute;left:844px;top:572px;width:1px;height:25px;background:#d9d9d9"></div>
<div style="position:absolute;left:993px;top:572px;width:1px;height:25px;background:#d9d9d9"></div>
<div style="position:absolute;left:1143px;top:572px;width:1px;height:25px;background:#d9d9d9"></div>
<div style="position:absolute;left:1326px;top:572px;width:1px;height:25px;background:#d9d9d9"></div>
<div style="position:absolute;left:1475px;top:572px;width:1px;height:25px;background:#d9d9d9"></div>
<div style="position:absolute;left:1719px;top:572px;width:1px;height:25px;background:#d9d9d9"></div>
<svg style="position:absolute;left:27px;top:574px" width="16" height="21" viewBox="0 0 16 21"><rect x="1.5" y="1.5" width="12.5" height="17.5" rx="2.2" fill="#fff" stroke="#1a69b0" stroke-width="2"/><path d="M6.2 6.8 H9.3 M6.2 10.8 H9.3" stroke="#1a69b0" stroke-width="1.7"/></svg>
<div style="position:absolute;left:50px;top:575px;line-height:21px;white-space:nowrap;font-size:16.5px;color:#000">2024.09.30 01:48:52</div>
<div style="position:absolute;left:47.5px;width:300px;text-align:right;top:575px;line-height:21px;white-space:nowrap;font-size:16.5px;color:#000">xauusdm</div>
<div style="position:absolute;left:151.3px;width:300px;text-align:right;top:575px;line-height:21px;white-space:nowrap;font-size:16.5px;color:#000;letter-spacing:0.3px">289238240</div>
<div style="position:absolute;left:241px;width:300px;text-align:right;top:575px;line-height:21px;white-space:nowrap;font-size:16.5px;color:#000">buy</div>
<div style="position:absolute;left:390.79999999999995px;width:300px;text-align:right;top:575px;line-height:21px;white-space:nowrap;font-size:16.5px;color:#000;letter-spacing:0.3px">1</div>
<div style="position:absolute;left:540.8px;width:300px;text-align:right;top:575px;line-height:21px;white-space:nowrap;font-size:16.5px;color:#000;letter-spacing:0.3px">2649.393</div>
<div style="position:absolute;left:1021.5px;width:300px;text-align:right;top:575px;line-height:21px;white-space:nowrap;font-size:16.5px;color:#000">2024.10.01 02:22:46</div>
<div style="position:absolute;left:1171.8px;width:300px;text-align:right;top:575px;line-height:21px;white-space:nowrap;font-size:16.5px;color:#000;letter-spacing:0.3px">2648.3305</div>
<div style="position:absolute;left:1415px;width:300px;text-align:right;top:575px;line-height:21px;white-space:nowrap;font-size:16.5px;color:#ff0000">-106.26</div>
<div style="position:absolute;left:1546.5px;width:300px;text-align:right;top:575px;line-height:21px;white-space:nowrap;font-size:16.5px;color:#ff0000">-0.04 %</div>
<div style="position:absolute;left:22px;top:598px;width:1829px;height:25px;background:#ffffff"></div>
<div style="position:absolute;left:22px;top:623px;width:1829px;height:1px;background:#d5d5d5"></div>
<div style="position:absolute;left:216px;top:598px;width:1px;height:25px;background:#d9d9d9"></div>
<div style="position:absolute;left:351px;top:598px;width:1px;height:25px;background:#d9d9d9"></div>
<div style="position:absolute;left:455px;top:598px;width:1px;height:25px;background:#d9d9d9"></div>
<div style="position:absolute;left:545px;top:598px;width:1px;height:25px;background:#d9d9d9"></div>
<div style="position:absolute;left:694px;top:598px;width:1px;height:25px;background:#d9d9d9"></div>
<div style="position:absolute;left:844px;top:598px;width:1px;height:25px;background:#d9d9d9"></div>
<div style="position:absolute;left:993px;top:598px;width:1px;height:25px;background:#d9d9d9"></div>
<div style="position:absolute;left:1143px;top:598px;width:1px;height:25px;background:#d9d9d9"></div>
<div style="position:absolute;left:1326px;top:598px;width:1px;height:25px;background:#d9d9d9"></div>
<div style="position:absolute;left:1475px;top:598px;width:1px;height:25px;background:#d9d9d9"></div>
<div style="position:absolute;left:1719px;top:598px;width:1px;height:25px;background:#d9d9d9"></div>
<svg style="position:absolute;left:27px;top:600px" width="16" height="21" viewBox="0 0 16 21"><rect x="1.5" y="1.5" width="12.5" height="17.5" rx="2.2" fill="#fff" stroke="#1a69b0" stroke-width="2"/><path d="M6.2 6.8 H9.3 M6.2 10.8 H9.3" stroke="#1a69b0" stroke-width="1.7"/></svg>
<div style="position:absolute;left:50px;top:601px;line-height:21px;white-space:nowrap;font-size:16.5px;color:#000">2024.09.30 18:26:55</div>
<div style="position:absolute;left:47.5px;width:300px;text-align:right;top:601px;line-height:21px;white-space:nowrap;font-size:16.5px;color:#000">xauusdm</div>
<div style="position:absolute;left:151.3px;width:300px;text-align:right;top:601px;line-height:21px;white-space:nowrap;font-size:16.5px;color:#000;letter-spacing:0.3px">289834859</div>
<div style="position:absolute;left:241px;width:300px;text-align:right;top:601px;line-height:21px;white-space:nowrap;font-size:16.5px;color:#000">buy</div>
<div style="position:absolute;left:390.79999999999995px;width:300px;text-align:right;top:601px;line-height:21px;white-space:nowrap;font-size:16.5px;color:#000;letter-spacing:0.3px">1.3</div>
<div style="position:absolute;left:540.8px;width:300px;text-align:right;top:601px;line-height:21px;white-space:nowrap;font-size:16.5px;color:#000;letter-spacing:0.3px">2625.000</div>
<div style="position:absolute;left:1021.5px;width:300px;text-align:right;top:601px;line-height:21px;white-space:nowrap;font-size:16.5px;color:#000">2024.10.01 02:23:05</div>
<div style="position:absolute;left:1171.8px;width:300px;text-align:right;top:601px;line-height:21px;white-space:nowrap;font-size:16.5px;color:#000;letter-spacing:0.3px">2637.738</div>
<div style="position:absolute;left:1415px;width:300px;text-align:right;top:601px;line-height:21px;white-space:nowrap;font-size:16.5px;color:#0000ff">1 655.94</div>
<div style="position:absolute;left:1546.5px;width:300px;text-align:right;top:601px;line-height:21px;white-space:nowrap;font-size:16.5px;color:#0000ff">0.49 %</div>
<div style="position:absolute;left:22px;top:624px;width:1829px;height:25px;background:#ebebeb"></div>
<div style="position:absolute;left:22px;top:649px;width:1829px;height:1px;background:#d5d5d5"></div>
<div style="position:absolute;left:216px;top:624px;width:1px;height:25px;background:#d9d9d9"></div>
<div style="position:absolute;left:351px;top:624px;width:1px;height:25px;background:#d9d9d9"></div>
<div style="position:absolute;left:455px;top:624px;width:1px;height:25px;background:#d9d9d9"></div>
<div style="position:absolute;left:545px;top:624px;width:1px;height:25px;background:#d9d9d9"></div>
<div style="position:absolute;left:694px;top:624px;width:1px;height:25px;background:#d9d9d9"></div>
<div style="position:absolute;left:844px;top:624px;width:1px;height:25px;background:#d9d9d9"></div>
<div style="position:absolute;left:993px;top:624px;width:1px;height:25px;background:#d9d9d9"></div>
<div style="position:absolute;left:1143px;top:624px;width:1px;height:25px;background:#d9d9d9"></div>
<div style="position:absolute;left:1326px;top:624px;width:1px;height:25px;background:#d9d9d9"></div>
<div style="position:absolute;left:1475px;top:624px;width:1px;height:25px;background:#d9d9d9"></div>
<div style="position:absolute;left:1719px;top:624px;width:1px;height:25px;background:#d9d9d9"></div>
<svg style="position:absolute;left:27px;top:626px" width="16" height="21" viewBox="0 0 16 21"><rect x="1.5" y="1.5" width="12.5" height="17.5" rx="2.2" fill="#fff" stroke="#1a69b0" stroke-width="2"/><path d="M6.2 6.8 H9.3 M6.2 10.8 H9.3" stroke="#1a69b0" stroke-width="1.7"/></svg>
<div style="position:absolute;left:50px;top:627px;line-height:21px;white-space:nowrap;font-size:16.5px;color:#000">2024.09.30 18:19:47</div>
<div style="position:absolute;left:47.5px;width:300px;text-align:right;top:627px;line-height:21px;white-space:nowrap;font-size:16.5px;color:#000">xauusdm</div>
<div style="position:absolute;left:151.3px;width:300px;text-align:right;top:627px;line-height:21px;white-space:nowrap;font-size:16.5px;color:#000;letter-spacing:0.3px">289834715</div>
<div style="position:absolute;left:241px;width:300px;text-align:right;top:627px;line-height:21px;white-space:nowrap;font-size:16.5px;color:#000">buy</div>
<div style="position:absolute;left:390.79999999999995px;width:300px;text-align:right;top:627px;line-height:21px;white-space:nowrap;font-size:16.5px;color:#000;letter-spacing:0.3px">1.3</div>
<div style="position:absolute;left:540.8px;width:300px;text-align:right;top:627px;line-height:21px;white-space:nowrap;font-size:16.5px;color:#000;letter-spacing:0.3px">2627.000</div>
<div style="position:absolute;left:1021.5px;width:300px;text-align:right;top:627px;line-height:21px;white-space:nowrap;font-size:16.5px;color:#000">2024.10.01 02:23:08</div>
<div style="position:absolute;left:1171.8px;width:300px;text-align:right;top:627px;line-height:21px;white-space:nowrap;font-size:16.5px;color:#000;letter-spacing:0.3px">2637.737</div>
<div style="position:absolute;left:1415px;width:300px;text-align:right;top:627px;line-height:21px;white-space:nowrap;font-size:16.5px;color:#0000ff">1 395.81</div>
<div style="position:absolute;left:1546.5px;width:300px;text-align:right;top:627px;line-height:21px;white-space:nowrap;font-size:16.5px;color:#0000ff">0.41 %</div>
<div style="position:absolute;left:22px;top:650px;width:1829px;height:25px;background:#ffffff"></div>
<div style="position:absolute;left:22px;top:675px;width:1829px;height:1px;background:#d5d5d5"></div>
<div style="position:absolute;left:216px;top:650px;width:1px;height:25px;background:#d9d9d9"></div>
<div style="position:absolute;left:351px;top:650px;width:1px;height:25px;background:#d9d9d9"></div>
<div style="position:absolute;left:455px;top:650px;width:1px;height:25px;background:#d9d9d9"></div>
<div style="position:absolute;left:545px;top:650px;width:1px;height:25px;background:#d9d9d9"></div>
<div style="position:absolute;left:694px;top:650px;width:1px;height:25px;background:#d9d9d9"></div>
<div style="position:absolute;left:844px;top:650px;width:1px;height:25px;background:#d9d9d9"></div>
<div style="position:absolute;left:993px;top:650px;width:1px;height:25px;background:#d9d9d9"></div>
<div style="position:absolute;left:1143px;top:650px;width:1px;height:25px;background:#d9d9d9"></div>
<div style="position:absolute;left:1326px;top:650px;width:1px;height:25px;background:#d9d9d9"></div>
<div style="position:absolute;left:1475px;top:650px;width:1px;height:25px;background:#d9d9d9"></div>
<div style="position:absolute;left:1719px;top:650px;width:1px;height:25px;background:#d9d9d9"></div>
<svg style="position:absolute;left:27px;top:652px" width="16" height="21" viewBox="0 0 16 21"><rect x="1.5" y="1.5" width="12.5" height="17.5" rx="2.2" fill="#fff" stroke="#1a69b0" stroke-width="2"/><path d="M6.2 6.8 H9.3 M6.2 10.8 H9.3" stroke="#1a69b0" stroke-width="1.7"/></svg>
<div style="position:absolute;left:50px;top:653px;line-height:21px;white-space:nowrap;font-size:16.5px;color:#000">2024.10.03 09:13:35</div>
<div style="position:absolute;left:47.5px;width:300px;text-align:right;top:653px;line-height:21px;white-space:nowrap;font-size:16.5px;color:#000">xauusdm</div>
<div style="position:absolute;left:151.3px;width:300px;text-align:right;top:653px;line-height:21px;white-space:nowrap;font-size:16.5px;color:#000;letter-spacing:0.3px">291941997</div>
<div style="position:absolute;left:241px;width:300px;text-align:right;top:653px;line-height:21px;white-space:nowrap;font-size:16.5px;color:#000">buy</div>
<div style="position:absolute;left:390.79999999999995px;width:300px;text-align:right;top:653px;line-height:21px;white-space:nowrap;font-size:16.5px;color:#000;letter-spacing:0.3px">1.3</div>
<div style="position:absolute;left:540.8px;width:300px;text-align:right;top:653px;line-height:21px;white-space:nowrap;font-size:16.5px;color:#000;letter-spacing:0.3px">2643.986</div>
<div style="position:absolute;left:1021.5px;width:300px;text-align:right;top:653px;line-height:21px;white-space:nowrap;font-size:16.5px;color:#000">2024.10.03 16:11:14</div>
<div style="position:absolute;left:1171.8px;width:300px;text-align:right;top:653px;line-height:21px;white-space:nowrap;font-size:16.5px;color:#000;letter-spacing:0.3px">2651.634</div>
<div style="position:absolute;left:1415px;width:300px;text-align:right;top:653px;line-height:21px;white-space:nowrap;font-size:16.5px;color:#0000ff">994.24</div>
<div style="position:absolute;left:1546.5px;width:300px;text-align:right;top:653px;line-height:21px;white-space:nowrap;font-size:16.5px;color:#0000ff">0.29 %</div>
<div style="position:absolute;left:22px;top:676px;width:1829px;height:25px;background:#ebebeb"></div>
<div style="position:absolute;left:22px;top:701px;width:1829px;height:1px;background:#d5d5d5"></div>
<div style="position:absolute;left:216px;top:676px;width:1px;height:25px;background:#d9d9d9"></div>
<div style="position:absolute;left:351px;top:676px;width:1px;height:25px;background:#d9d9d9"></div>
<div style="position:absolute;left:455px;top:676px;width:1px;height:25px;background:#d9d9d9"></div>
<div style="position:absolute;left:545px;top:676px;width:1px;height:25px;background:#d9d9d9"></div>
<div style="position:absolute;left:694px;top:676px;width:1px;height:25px;background:#d9d9d9"></div>
<div style="position:absolute;left:844px;top:676px;width:1px;height:25px;background:#d9d9d9"></div>
<div style="position:absolute;left:993px;top:676px;width:1px;height:25px;background:#d9d9d9"></div>
<div style="position:absolute;left:1143px;top:676px;width:1px;height:25px;background:#d9d9d9"></div>
<div style="position:absolute;left:1326px;top:676px;width:1px;height:25px;background:#d9d9d9"></div>
<div style="position:absolute;left:1475px;top:676px;width:1px;height:25px;background:#d9d9d9"></div>
<div style="position:absolute;left:1719px;top:676px;width:1px;height:25px;background:#d9d9d9"></div>
<svg style="position:absolute;left:27px;top:678px" width="16" height="21" viewBox="0 0 16 21"><rect x="1.5" y="1.5" width="12.5" height="17.5" rx="2.2" fill="#fff" stroke="#1a69b0" stroke-width="2"/><path d="M6.2 6.8 H9.3 M6.2 10.8 H9.3" stroke="#1a69b0" stroke-width="1.7"/></svg>
<div style="position:absolute;left:50px;top:679px;line-height:21px;white-space:nowrap;font-size:16.5px;color:#000">2024.10.03 13:00:20</div>
<div style="position:absolute;left:47.5px;width:300px;text-align:right;top:679px;line-height:21px;white-space:nowrap;font-size:16.5px;color:#000">xauusdm</div>
<div style="position:absolute;left:151.3px;width:300px;text-align:right;top:679px;line-height:21px;white-space:nowrap;font-size:16.5px;color:#000;letter-spacing:0.3px">291949787</div>
<div style="position:absolute;left:241px;width:300px;text-align:right;top:679px;line-height:21px;white-space:nowrap;font-size:16.5px;color:#000">buy</div>
<div style="position:absolute;left:390.79999999999995px;width:300px;text-align:right;top:679px;line-height:21px;white-space:nowrap;font-size:16.5px;color:#000;letter-spacing:0.3px">1.3</div>
<div style="position:absolute;left:540.8px;width:300px;text-align:right;top:679px;line-height:21px;white-space:nowrap;font-size:16.5px;color:#000;letter-spacing:0.3px">2642.000</div>
<div style="position:absolute;left:1021.5px;width:300px;text-align:right;top:679px;line-height:21px;white-space:nowrap;font-size:16.5px;color:#000">2024.10.04 01:36:51</div>
<div style="position:absolute;left:1171.8px;width:300px;text-align:right;top:679px;line-height:21px;white-space:nowrap;font-size:16.5px;color:#000;letter-spacing:0.3px">2653.948538</div>
<div style="position:absolute;left:1415px;width:300px;text-align:right;top:679px;line-height:21px;white-space:nowrap;font-size:16.5px;color:#0000ff">1 553.31</div>
<div style="position:absolute;left:1546.5px;width:300px;text-align:right;top:679px;line-height:21px;white-space:nowrap;font-size:16.5px;color:#0000ff">0.45 %</div>
<div style="position:absolute;left:22px;top:702px;width:1829px;height:25px;background:#ffffff"></div>
<div style="position:absolute;left:22px;top:727px;width:1829px;height:1px;background:#d5d5d5"></div>
<div style="position:absolute;left:216px;top:702px;width:1px;height:25px;background:#d9d9d9"></div>
<div style="position:absolute;left:351px;top:702px;width:1px;height:25px;background:#d9d9d9"></div>
<div style="position:absolute;left:455px;top:702px;width:1px;height:25px;background:#d9d9d9"></div>
<div style="position:absolute;left:545px;top:702px;width:1px;height:25px;background:#d9d9d9"></div>
<div style="position:absolute;left:694px;top:702px;width:1px;height:25px;background:#d9d9d9"></div>
<div style="position:absolute;left:844px;top:702px;width:1px;height:25px;background:#d9d9d9"></div>
<div style="position:absolute;left:993px;top:702px;width:1px;height:25px;background:#d9d9d9"></div>
<div style="position:absolute;left:1143px;top:702px;width:1px;height:25px;background:#d9d9d9"></div>
<div style="position:absolute;left:1326px;top:702px;width:1px;height:25px;background:#d9d9d9"></div>
<div style="position:absolute;left:1475px;top:702px;width:1px;height:25px;background:#d9d9d9"></div>
<div style="position:absolute;left:1719px;top:702px;width:1px;height:25px;background:#d9d9d9"></div>
<svg style="position:absolute;left:27px;top:704px" width="16" height="21" viewBox="0 0 16 21"><rect x="1.5" y="1.5" width="12.5" height="17.5" rx="2.2" fill="#fff" stroke="#e0403a" stroke-width="2"/><path d="M6.2 6.8 H9.3 M6.2 10.8 H9.3" stroke="#e0403a" stroke-width="1.7"/></svg>
<div style="position:absolute;left:50px;top:705px;line-height:21px;white-space:nowrap;font-size:16.5px;color:#000">2024.10.03 16:39:22</div>
<div style="position:absolute;left:47.5px;width:300px;text-align:right;top:705px;line-height:21px;white-space:nowrap;font-size:16.5px;color:#000">xauusdm</div>
<div style="position:absolute;left:151.3px;width:300px;text-align:right;top:705px;line-height:21px;white-space:nowrap;font-size:16.5px;color:#000;letter-spacing:0.3px">291710469</div>
<div style="position:absolute;left:241px;width:300px;text-align:right;top:705px;line-height:21px;white-space:nowrap;font-size:16.5px;color:#000">sell</div>
<div style="position:absolute;left:390.79999999999995px;width:300px;text-align:right;top:705px;line-height:21px;white-space:nowrap;font-size:16.5px;color:#000;letter-spacing:0.3px">1.3</div>
<div style="position:absolute;left:540.8px;width:300px;text-align:right;top:705px;line-height:21px;white-space:nowrap;font-size:16.5px;color:#000;letter-spacing:0.3px">2660.000</div>
<div style="position:absolute;left:1021.5px;width:300px;text-align:right;top:705px;line-height:21px;white-space:nowrap;font-size:16.5px;color:#000">2024.10.04 01:37:01</div>
<div style="position:absolute;left:1171.8px;width:300px;text-align:right;top:705px;line-height:21px;white-space:nowrap;font-size:16.5px;color:#000;letter-spacing:0.3px">2657.587</div>
<div style="position:absolute;left:1415px;width:300px;text-align:right;top:705px;line-height:21px;white-space:nowrap;font-size:16.5px;color:#0000ff">313.69</div>
<div style="position:absolute;left:1546.5px;width:300px;text-align:right;top:705px;line-height:21px;white-space:nowrap;font-size:16.5px;color:#0000ff">0.09 %</div>
<div style="position:absolute;left:22px;top:728px;width:1829px;height:25px;background:#ebebeb"></div>
<div style="position:absolute;left:22px;top:753px;width:1829px;height:1px;background:#d5d5d5"></div>
<div style="position:absolute;left:216px;top:728px;width:1px;height:25px;background:#d9d9d9"></div>
<div style="position:absolute;left:351px;top:728px;width:1px;height:25px;background:#d9d9d9"></div>
<div style="position:absolute;left:455px;top:728px;width:1px;height:25px;background:#d9d9d9"></div>
<div style="position:absolute;left:545px;top:728px;width:1px;height:25px;background:#d9d9d9"></div>
<div style="position:absolute;left:694px;top:728px;width:1px;height:25px;background:#d9d9d9"></div>
<div style="position:absolute;left:844px;top:728px;width:1px;height:25px;background:#d9d9d9"></div>
<div style="position:absolute;left:993px;top:728px;width:1px;height:25px;background:#d9d9d9"></div>
<div style="position:absolute;left:1143px;top:728px;width:1px;height:25px;background:#d9d9d9"></div>
<div style="position:absolute;left:1326px;top:728px;width:1px;height:25px;background:#d9d9d9"></div>
<div style="position:absolute;left:1475px;top:728px;width:1px;height:25px;background:#d9d9d9"></div>
<div style="position:absolute;left:1719px;top:728px;width:1px;height:25px;background:#d9d9d9"></div>
<svg style="position:absolute;left:27px;top:730px" width="16" height="21" viewBox="0 0 16 21"><rect x="1.5" y="1.5" width="12.5" height="17.5" rx="2.2" fill="#fff" stroke="#e0403a" stroke-width="2"/><path d="M6.2 6.8 H9.3 M6.2 10.8 H9.3" stroke="#e0403a" stroke-width="1.7"/></svg>
<div style="position:absolute;left:50px;top:731px;line-height:21px;white-space:nowrap;font-size:16.5px;color:#000">2024.10.04 03:05:33</div>
<div style="position:absolute;left:47.5px;width:300px;text-align:right;top:731px;line-height:21px;white-space:nowrap;font-size:16.5px;color:#000">xauusdm</div>
<div style="position:absolute;left:151.3px;width:300px;text-align:right;top:731px;line-height:21px;white-space:nowrap;font-size:16.5px;color:#000;letter-spacing:0.3px">292416513</div>
<div style="position:absolute;left:241px;width:300px;text-align:right;top:731px;line-height:21px;white-space:nowrap;font-size:16.5px;color:#000">sell</div>
<div style="position:absolute;left:390.79999999999995px;width:300px;text-align:right;top:731px;line-height:21px;white-space:nowrap;font-size:16.5px;color:#000;letter-spacing:0.3px">1.3</div>
<div style="position:absolute;left:540.8px;width:300px;text-align:right;top:731px;line-height:21px;white-space:nowrap;font-size:16.5px;color:#000;letter-spacing:0.3px">2661.933</div>
<div style="position:absolute;left:1021.5px;width:300px;text-align:right;top:731px;line-height:21px;white-space:nowrap;font-size:16.5px;color:#000">2024.10.04 07:00:20</div>
<div style="position:absolute;left:1171.8px;width:300px;text-align:right;top:731px;line-height:21px;white-space:nowrap;font-size:16.5px;color:#000;letter-spacing:0.3px">2660.730</div>
<div style="position:absolute;left:1415px;width:300px;text-align:right;top:731px;line-height:21px;white-space:nowrap;font-size:16.5px;color:#0000ff">156.39</div>
<div style="position:absolute;left:1546.5px;width:300px;text-align:right;top:731px;line-height:21px;white-space:nowrap;font-size:16.5px;color:#0000ff">0.05 %</div>
<div style="position:absolute;left:22px;top:754px;width:1829px;height:25px;background:#ffffff"></div>
<div style="position:absolute;left:22px;top:779px;width:1829px;height:1px;background:#d5d5d5"></div>
<div style="position:absolute;left:216px;top:754px;width:1px;height:25px;background:#d9d9d9"></div>
<div style="position:absolute;left:351px;top:754px;width:1px;height:25px;background:#d9d9d9"></div>
<div style="position:absolute;left:455px;top:754px;width:1px;height:25px;background:#d9d9d9"></div>
<div style="position:absolute;left:545px;top:754px;width:1px;height:25px;background:#d9d9d9"></div>
<div style="position:absolute;left:694px;top:754px;width:1px;height:25px;background:#d9d9d9"></div>
<div style="position:absolute;left:844px;top:754px;width:1px;height:25px;background:#d9d9d9"></div>
<div style="position:absolute;left:993px;top:754px;width:1px;height:25px;background:#d9d9d9"></div>
<div style="position:absolute;left:1143px;top:754px;width:1px;height:25px;background:#d9d9d9"></div>
<div style="position:absolute;left:1326px;top:754px;width:1px;height:25px;background:#d9d9d9"></div>
<div style="position:absolute;left:1475px;top:754px;width:1px;height:25px;background:#d9d9d9"></div>
<div style="position:absolute;left:1719px;top:754px;width:1px;height:25px;background:#d9d9d9"></div>
<svg style="position:absolute;left:27px;top:756px" width="16" height="21" viewBox="0 0 16 21"><rect x="1.5" y="1.5" width="12.5" height="17.5" rx="2.2" fill="#fff" stroke="#e0403a" stroke-width="2"/><path d="M6.2 6.8 H9.3 M6.2 10.8 H9.3" stroke="#e0403a" stroke-width="1.7"/></svg>
<div style="position:absolute;left:50px;top:757px;line-height:21px;white-space:nowrap;font-size:16.5px;color:#000">2024.10.04 03:10:57</div>
<div style="position:absolute;left:47.5px;width:300px;text-align:right;top:757px;line-height:21px;white-space:nowrap;font-size:16.5px;color:#000">xauusdm</div>
<div style="position:absolute;left:151.3px;width:300px;text-align:right;top:757px;line-height:21px;white-space:nowrap;font-size:16.5px;color:#000;letter-spacing:0.3px">292416558</div>
<div style="position:absolute;left:241px;width:300px;text-align:right;top:757px;line-height:21px;white-space:nowrap;font-size:16.5px;color:#000">sell</div>
<div style="position:absolute;left:390.79999999999995px;width:300px;text-align:right;top:757px;line-height:21px;white-space:nowrap;font-size:16.5px;color:#000;letter-spacing:0.3px">1.3</div>
<div style="position:absolute;left:540.8px;width:300px;text-align:right;top:757px;line-height:21px;white-space:nowrap;font-size:16.5px;color:#000;letter-spacing:0.3px">2663.000</div>
<div style="position:absolute;left:1021.5px;width:300px;text-align:right;top:757px;line-height:21px;white-space:nowrap;font-size:16.5px;color:#000">2024.10.04 09:32:43</div>
<div style="position:absolute;left:1171.8px;width:300px;text-align:right;top:757px;line-height:21px;white-space:nowrap;font-size:16.5px;color:#000;letter-spacing:0.3px">2658.234</div>
<div style="position:absolute;left:1415px;width:300px;text-align:right;top:757px;line-height:21px;white-space:nowrap;font-size:16.5px;color:#0000ff">619.58</div>
<div style="position:absolute;left:1546.5px;width:300px;text-align:right;top:757px;line-height:21px;white-space:nowrap;font-size:16.5px;color:#0000ff">0.18 %</div>
<div style="position:absolute;left:22px;top:780px;width:1829px;height:25px;background:#ebebeb"></div>
<div style="position:absolute;left:22px;top:805px;width:1829px;height:1px;background:#d5d5d5"></div>
<div style="position:absolute;left:216px;top:780px;width:1px;height:25px;background:#d9d9d9"></div>
<div style="position:absolute;left:351px;top:780px;width:1px;height:25px;background:#d9d9d9"></div>
<div style="position:absolute;left:455px;top:780px;width:1px;height:25px;background:#d9d9d9"></div>
<div style="position:absolute;left:545px;top:780px;width:1px;height:25px;background:#d9d9d9"></div>
<div style="position:absolute;left:694px;top:780px;width:1px;height:25px;background:#d9d9d9"></div>
<div style="position:absolute;left:844px;top:780px;width:1px;height:25px;background:#d9d9d9"></div>
<div style="position:absolute;left:993px;top:780px;width:1px;height:25px;background:#d9d9d9"></div>
<div style="position:absolute;left:1143px;top:780px;width:1px;height:25px;background:#d9d9d9"></div>
<div style="position:absolute;left:1326px;top:780px;width:1px;height:25px;background:#d9d9d9"></div>
<div style="position:absolute;left:1475px;top:780px;width:1px;height:25px;background:#d9d9d9"></div>
<div style="position:absolute;left:1719px;top:780px;width:1px;height:25px;background:#d9d9d9"></div>
<svg style="position:absolute;left:27px;top:782px" width="16" height="21" viewBox="0 0 16 21"><rect x="1.5" y="1.5" width="12.5" height="17.5" rx="2.2" fill="#fff" stroke="#1a69b0" stroke-width="2"/><path d="M6.2 6.8 H9.3 M6.2 10.8 H9.3" stroke="#1a69b0" stroke-width="1.7"/></svg>
<div style="position:absolute;left:50px;top:783px;line-height:21px;white-space:nowrap;font-size:16.5px;color:#000">2024.10.04 12:31:01</div>
<div style="position:absolute;left:47.5px;width:300px;text-align:right;top:783px;line-height:21px;white-space:nowrap;font-size:16.5px;color:#000">xauusdm</div>
<div style="position:absolute;left:151.3px;width:300px;text-align:right;top:783px;line-height:21px;white-space:nowrap;font-size:16.5px;color:#000;letter-spacing:0.3px">292646929</div>
<div style="position:absolute;left:241px;width:300px;text-align:right;top:783px;line-height:21px;white-space:nowrap;font-size:16.5px;color:#000">buy</div>
<div style="position:absolute;left:390.79999999999995px;width:300px;text-align:right;top:783px;line-height:21px;white-space:nowrap;font-size:16.5px;color:#000;letter-spacing:0.3px">1.3</div>
<div style="position:absolute;left:540.8px;width:300px;text-align:right;top:783px;line-height:21px;white-space:nowrap;font-size:16.5px;color:#000;letter-spacing:0.3px">2641.000</div>
<div style="position:absolute;left:1021.5px;width:300px;text-align:right;top:783px;line-height:21px;white-space:nowrap;font-size:16.5px;color:#000">2024.10.04 12:34:48</div>
<div style="position:absolute;left:1171.8px;width:300px;text-align:right;top:783px;line-height:21px;white-space:nowrap;font-size:16.5px;color:#000;letter-spacing:0.3px">2642.326</div>
<div style="position:absolute;left:1415px;width:300px;text-align:right;top:783px;line-height:21px;white-space:nowrap;font-size:16.5px;color:#0000ff">172.38</div>
<div style="position:absolute;left:1546.5px;width:300px;text-align:right;top:783px;line-height:21px;white-space:nowrap;font-size:16.5px;color:#0000ff">0.05 %</div>
<div style="position:absolute;left:22px;top:806px;width:1829px;height:25px;background:#ffffff"></div>
<div style="position:absolute;left:22px;top:831px;width:1829px;height:1px;background:#d5d5d5"></div>
<div style="position:absolute;left:216px;top:806px;width:1px;height:25px;background:#d9d9d9"></div>
<div style="position:absolute;left:351px;top:806px;width:1px;height:25px;background:#d9d9d9"></div>
<div style="position:absolute;left:455px;top:806px;width:1px;height:25px;background:#d9d9d9"></div>
<div style="position:absolute;left:545px;top:806px;width:1px;height:25px;background:#d9d9d9"></div>
<div style="position:absolute;left:694px;top:806px;width:1px;height:25px;background:#d9d9d9"></div>
<div style="position:absolute;left:844px;top:806px;width:1px;height:25px;background:#d9d9d9"></div>
<div style="position:absolute;left:993px;top:806px;width:1px;height:25px;background:#d9d9d9"></div>
<div style="position:absolute;left:1143px;top:806px;width:1px;height:25px;background:#d9d9d9"></div>
<div style="position:absolute;left:1326px;top:806px;width:1px;height:25px;background:#d9d9d9"></div>
<div style="position:absolute;left:1475px;top:806px;width:1px;height:25px;background:#d9d9d9"></div>
<div style="position:absolute;left:1719px;top:806px;width:1px;height:25px;background:#d9d9d9"></div>
<svg style="position:absolute;left:27px;top:808px" width="16" height="21" viewBox="0 0 16 21"><rect x="1.5" y="1.5" width="12.5" height="17.5" rx="2.2" fill="#fff" stroke="#1a69b0" stroke-width="2"/><path d="M6.2 6.8 H9.3 M6.2 10.8 H9.3" stroke="#1a69b0" stroke-width="1.7"/></svg>
<div style="position:absolute;left:50px;top:809px;line-height:21px;white-space:nowrap;font-size:16.5px;color:#000">2024.10.04 12:31:42</div>
<div style="position:absolute;left:47.5px;width:300px;text-align:right;top:809px;line-height:21px;white-space:nowrap;font-size:16.5px;color:#000">xauusdm</div>
<div style="position:absolute;left:151.3px;width:300px;text-align:right;top:809px;line-height:21px;white-space:nowrap;font-size:16.5px;color:#000;letter-spacing:0.3px">292650328</div>
<div style="position:absolute;left:241px;width:300px;text-align:right;top:809px;line-height:21px;white-space:nowrap;font-size:16.5px;color:#000">buy</div>
<div style="position:absolute;left:390.79999999999995px;width:300px;text-align:right;top:809px;line-height:21px;white-space:nowrap;font-size:16.5px;color:#000;letter-spacing:0.3px">1.3</div>
<div style="position:absolute;left:540.8px;width:300px;text-align:right;top:809px;line-height:21px;white-space:nowrap;font-size:16.5px;color:#000;letter-spacing:0.3px">2640.406</div>
<div style="position:absolute;left:1021.5px;width:300px;text-align:right;top:809px;line-height:21px;white-space:nowrap;font-size:16.5px;color:#000">2024.10.04 13:04:26</div>
<div style="position:absolute;left:1171.8px;width:300px;text-align:right;top:809px;line-height:21px;white-space:nowrap;font-size:16.5px;color:#000;letter-spacing:0.3px">2640.171</div>
<div style="position:absolute;left:1415px;width:300px;text-align:right;top:809px;line-height:21px;white-space:nowrap;font-size:16.5px;color:#ff0000">-30.55</div>
<div style="position:absolute;left:1546.5px;width:300px;text-align:right;top:809px;line-height:21px;white-space:nowrap;font-size:16.5px;color:#ff0000">-0.01 %</div>
<div style="position:absolute;left:22px;top:832px;width:1829px;height:26px;background:#ebebeb"></div>
<div style="position:absolute;left:22px;top:858px;width:1829px;height:1px;background:#d5d5d5"></div>
<div style="position:absolute;left:216px;top:832px;width:1px;height:26px;background:#d9d9d9"></div>
<div style="position:absolute;left:351px;top:832px;width:1px;height:26px;background:#d9d9d9"></div>
<div style="position:absolute;left:455px;top:832px;width:1px;height:26px;background:#d9d9d9"></div>
<div style="position:absolute;left:545px;top:832px;width:1px;height:26px;background:#d9d9d9"></div>
<div style="position:absolute;left:694px;top:832px;width:1px;height:26px;background:#d9d9d9"></div>
<div style="position:absolute;left:844px;top:832px;width:1px;height:26px;background:#d9d9d9"></div>
<div style="position:absolute;left:993px;top:832px;width:1px;height:26px;background:#d9d9d9"></div>
<div style="position:absolute;left:1143px;top:832px;width:1px;height:26px;background:#d9d9d9"></div>
<div style="position:absolute;left:1326px;top:832px;width:1px;height:26px;background:#d9d9d9"></div>
<div style="position:absolute;left:1475px;top:832px;width:1px;height:26px;background:#d9d9d9"></div>
<div style="position:absolute;left:1719px;top:832px;width:1px;height:26px;background:#d9d9d9"></div>
<svg style="position:absolute;left:27px;top:834px" width="16" height="21" viewBox="0 0 16 21"><rect x="1.5" y="1.5" width="12.5" height="17.5" rx="2.2" fill="#fff" stroke="#1a69b0" stroke-width="2"/><path d="M6.2 6.8 H9.3 M6.2 10.8 H9.3" stroke="#1a69b0" stroke-width="1.7"/></svg>
<div style="position:absolute;left:50px;top:835px;line-height:21px;white-space:nowrap;font-size:16.5px;color:#000">2024.10.08 02:34:33</div>
<div style="position:absolute;left:47.5px;width:300px;text-align:right;top:835px;line-height:21px;white-space:nowrap;font-size:16.5px;color:#000">xauusdm</div>
<div style="position:absolute;left:151.3px;width:300px;text-align:right;top:835px;line-height:21px;white-space:nowrap;font-size:16.5px;color:#000;letter-spacing:0.3px">294056954</div>
<div style="position:absolute;left:241px;width:300px;text-align:right;top:835px;line-height:21px;white-space:nowrap;font-size:16.5px;color:#000">buy</div>
<div style="position:absolute;left:390.79999999999995px;width:300px;text-align:right;top:835px;line-height:21px;white-space:nowrap;font-size:16.5px;color:#000;letter-spacing:0.3px">1.3</div>
<div style="position:absolute;left:540.8px;width:300px;text-align:right;top:835px;line-height:21px;white-space:nowrap;font-size:16.5px;color:#000;letter-spacing:0.3px">2635.601</div>
<div style="position:absolute;left:1021.5px;width:300px;text-align:right;top:835px;line-height:21px;white-space:nowrap;font-size:16.5px;color:#000">2024.10.08 02:40:05</div>
<div style="position:absolute;left:1171.8px;width:300px;text-align:right;top:835px;line-height:21px;white-space:nowrap;font-size:16.5px;color:#000;letter-spacing:0.3px">2636.331</div>
<div style="position:absolute;left:1415px;width:300px;text-align:right;top:835px;line-height:21px;white-space:nowrap;font-size:16.5px;color:#0000ff">94.90</div>
<div style="position:absolute;left:1546.5px;width:300px;text-align:right;top:835px;line-height:21px;white-space:nowrap;font-size:16.5px;color:#0000ff">0.03 %</div>
<div style="position:absolute;left:22px;top:859px;width:1829px;height:25px;background:#ffffff"></div>
<div style="position:absolute;left:22px;top:884px;width:1829px;height:1px;background:#d5d5d5"></div>
<div style="position:absolute;left:216px;top:859px;width:1px;height:25px;background:#d9d9d9"></div>
<div style="position:absolute;left:351px;top:859px;width:1px;height:25px;background:#d9d9d9"></div>
<div style="position:absolute;left:455px;top:859px;width:1px;height:25px;background:#d9d9d9"></div>
<div style="position:absolute;left:545px;top:859px;width:1px;height:25px;background:#d9d9d9"></div>
<div style="position:absolute;left:694px;top:859px;width:1px;height:25px;background:#d9d9d9"></div>
<div style="position:absolute;left:844px;top:859px;width:1px;height:25px;background:#d9d9d9"></div>
<div style="position:absolute;left:993px;top:859px;width:1px;height:25px;background:#d9d9d9"></div>
<div style="position:absolute;left:1143px;top:859px;width:1px;height:25px;background:#d9d9d9"></div>
<div style="position:absolute;left:1326px;top:859px;width:1px;height:25px;background:#d9d9d9"></div>
<div style="position:absolute;left:1475px;top:859px;width:1px;height:25px;background:#d9d9d9"></div>
<div style="position:absolute;left:1719px;top:859px;width:1px;height:25px;background:#d9d9d9"></div>
<svg style="position:absolute;left:27px;top:861px" width="16" height="21" viewBox="0 0 16 21"><rect x="1.5" y="1.5" width="12.5" height="17.5" rx="2.2" fill="#fff" stroke="#1a69b0" stroke-width="2"/><path d="M6.2 6.8 H9.3 M6.2 10.8 H9.3" stroke="#1a69b0" stroke-width="1.7"/></svg>
<div style="position:absolute;left:50px;top:862px;line-height:21px;white-space:nowrap;font-size:16.5px;color:#000">2024.10.08 02:35:39</div>
<div style="position:absolute;left:47.5px;width:300px;text-align:right;top:862px;line-height:21px;white-space:nowrap;font-size:16.5px;color:#000">xauusdm</div>
<div style="position:absolute;left:151.3px;width:300px;text-align:right;top:862px;line-height:21px;white-space:nowrap;font-size:16.5px;color:#000;letter-spacing:0.3px">294050320</div>
<div style="position:absolute;left:241px;width:300px;text-align:right;top:862px;line-height:21px;white-space:nowrap;font-size:16.5px;color:#000">buy</div>
<div style="position:absolute;left:390.79999999999995px;width:300px;text-align:right;top:862px;line-height:21px;white-space:nowrap;font-size:16.5px;color:#000;letter-spacing:0.3px">1.3</div>
<div style="position:absolute;left:540.8px;width:300px;text-align:right;top:862px;line-height:21px;white-space:nowrap;font-size:16.5px;color:#000;letter-spacing:0.3px">2635.000</div>
<div style="position:absolute;left:1021.5px;width:300px;text-align:right;top:862px;line-height:21px;white-space:nowrap;font-size:16.5px;color:#000">2024.10.08 07:26:13</div>
<div style="position:absolute;left:1171.8px;width:300px;text-align:right;top:862px;line-height:21px;white-space:nowrap;font-size:16.5px;color:#000;letter-spacing:0.3px">2639.655846</div>
<div style="position:absolute;left:1415px;width:300px;text-align:right;top:862px;line-height:21px;white-space:nowrap;font-size:16.5px;color:#0000ff">605.26</div>
<div style="position:absolute;left:1546.5px;width:300px;text-align:right;top:862px;line-height:21px;white-space:nowrap;font-size:16.5px;color:#0000ff">0.18 %</div>
<div style="position:absolute;left:22px;top:885px;width:1829px;height:25px;background:#ebebeb"></div>
<div style="position:absolute;left:22px;top:910px;width:1829px;height:1px;background:#d5d5d5"></div>
<div style="position:absolute;left:216px;top:885px;width:1px;height:25px;background:#d9d9d9"></div>
<div style="position:absolute;left:351px;top:885px;width:1px;height:25px;background:#d9d9d9"></div>
<div style="position:absolute;left:455px;top:885px;width:1px;height:25px;background:#d9d9d9"></div>
<div style="position:absolute;left:545px;top:885px;width:1px;height:25px;background:#d9d9d9"></div>
<div style="position:absolute;left:694px;top:885px;width:1px;height:25px;background:#d9d9d9"></div>
<div style="position:absolute;left:844px;top:885px;width:1px;height:25px;background:#d9d9d9"></div>
<div style="position:absolute;left:993px;top:885px;width:1px;height:25px;background:#d9d9d9"></div>
<div style="position:absolute;left:1143px;top:885px;width:1px;height:25px;background:#d9d9d9"></div>
<div style="position:absolute;left:1326px;top:885px;width:1px;height:25px;background:#d9d9d9"></div>
<div style="position:absolute;left:1475px;top:885px;width:1px;height:25px;background:#d9d9d9"></div>
<div style="position:absolute;left:1719px;top:885px;width:1px;height:25px;background:#d9d9d9"></div>
<svg style="position:absolute;left:27px;top:887px" width="16" height="21" viewBox="0 0 16 21"><rect x="1.5" y="1.5" width="12.5" height="17.5" rx="2.2" fill="#fff" stroke="#1a69b0" stroke-width="2"/><path d="M6.2 6.8 H9.3 M6.2 10.8 H9.3" stroke="#1a69b0" stroke-width="1.7"/></svg>
<div style="position:absolute;left:50px;top:888px;line-height:21px;white-space:nowrap;font-size:16.5px;color:#000">2024.10.08 07:03:18</div>
<div style="position:absolute;left:47.5px;width:300px;text-align:right;top:888px;line-height:21px;white-space:nowrap;font-size:16.5px;color:#000">xauusdm</div>
<div style="position:absolute;left:151.3px;width:300px;text-align:right;top:888px;line-height:21px;white-space:nowrap;font-size:16.5px;color:#000;letter-spacing:0.3px">294050208</div>
<div style="position:absolute;left:241px;width:300px;text-align:right;top:888px;line-height:21px;white-space:nowrap;font-size:16.5px;color:#000">buy</div>
<div style="position:absolute;left:390.79999999999995px;width:300px;text-align:right;top:888px;line-height:21px;white-space:nowrap;font-size:16.5px;color:#000;letter-spacing:0.3px">1.3</div>
<div style="position:absolute;left:540.8px;width:300px;text-align:right;top:888px;line-height:21px;white-space:nowrap;font-size:16.5px;color:#000;letter-spacing:0.3px">2632.000</div>
<div style="position:absolute;left:1021.5px;width:300px;text-align:right;top:888px;line-height:21px;white-space:nowrap;font-size:16.5px;color:#000">2024.10.08 12:36:50</div>
<div style="position:absolute;left:1171.8px;width:300px;text-align:right;top:888px;line-height:21px;white-space:nowrap;font-size:16.5px;color:#000;letter-spacing:0.3px">2648.335308</div>
<div style="position:absolute;left:1415px;width:300px;text-align:right;top:888px;line-height:21px;white-space:nowrap;font-size:16.5px;color:#0000ff">2 123.59</div>
<div style="position:absolute;left:1546.5px;width:300px;text-align:right;top:888px;line-height:21px;white-space:nowrap;font-size:16.5px;color:#0000ff">0.62 %</div>
<div style="position:absolute;left:22px;top:911px;width:1829px;height:25px;background:#ffffff"></div>
<div style="position:absolute;left:22px;top:936px;width:1829px;height:1px;background:#d5d5d5"></div>
<div style="position:absolute;left:216px;top:911px;width:1px;height:25px;background:#d9d9d9"></div>
<div style="position:absolute;left:351px;top:911px;width:1px;height:25px;background:#d9d9d9"></div>
<div style="position:absolute;left:455px;top:911px;width:1px;height:25px;background:#d9d9d9"></div>
<div style="position:absolute;left:545px;top:911px;width:1px;height:25px;background:#d9d9d9"></div>
<div style="position:absolute;left:694px;top:911px;width:1px;height:25px;background:#d9d9d9"></div>
<div style="position:absolute;left:844px;top:911px;width:1px;height:25px;background:#d9d9d9"></div>
<div style="position:absolute;left:993px;top:911px;width:1px;height:25px;background:#d9d9d9"></div>
<div style="position:absolute;left:1143px;top:911px;width:1px;height:25px;background:#d9d9d9"></div>
<div style="position:absolute;left:1326px;top:911px;width:1px;height:25px;background:#d9d9d9"></div>
<div style="position:absolute;left:1475px;top:911px;width:1px;height:25px;background:#d9d9d9"></div>
<div style="position:absolute;left:1719px;top:911px;width:1px;height:25px;background:#d9d9d9"></div>
<svg style="position:absolute;left:27px;top:913px" width="16" height="21" viewBox="0 0 16 21"><rect x="1.5" y="1.5" width="12.5" height="17.5" rx="2.2" fill="#fff" stroke="#e0403a" stroke-width="2"/><path d="M6.2 6.8 H9.3 M6.2 10.8 H9.3" stroke="#e0403a" stroke-width="1.7"/></svg>
<div style="position:absolute;left:50px;top:914px;line-height:21px;white-space:nowrap;font-size:16.5px;color:#000">2024.10.09 05:32:37</div>
<div style="position:absolute;left:47.5px;width:300px;text-align:right;top:914px;line-height:21px;white-space:nowrap;font-size:16.5px;color:#000">xauusdm</div>
<div style="position:absolute;left:151.3px;width:300px;text-align:right;top:914px;line-height:21px;white-space:nowrap;font-size:16.5px;color:#000;letter-spacing:0.3px">294800945</div>
<div style="position:absolute;left:241px;width:300px;text-align:right;top:914px;line-height:21px;white-space:nowrap;font-size:16.5px;color:#000">sell</div>
<div style="position:absolute;left:390.79999999999995px;width:300px;text-align:right;top:914px;line-height:21px;white-space:nowrap;font-size:16.5px;color:#000;letter-spacing:0.3px">1.3</div>
<div style="position:absolute;left:540.8px;width:300px;text-align:right;top:914px;line-height:21px;white-space:nowrap;font-size:16.5px;color:#000;letter-spacing:0.3px">2623.000</div>
<div style="position:absolute;left:1021.5px;width:300px;text-align:right;top:914px;line-height:21px;white-space:nowrap;font-size:16.5px;color:#000">2024.10.09 08:21:39</div>
<div style="position:absolute;left:1171.8px;width:300px;text-align:right;top:914px;line-height:21px;white-space:nowrap;font-size:16.5px;color:#000;letter-spacing:0.3px">2612.721154</div>
<div style="position:absolute;left:1415px;width:300px;text-align:right;top:914px;line-height:21px;white-space:nowrap;font-size:16.5px;color:#0000ff">1 336.25</div>
<div style="position:absolute;left:1546.5px;width:300px;text-align:right;top:914px;line-height:21px;white-space:nowrap;font-size:16.5px;color:#0000ff">0.39 %</div>
<div style="position:absolute;left:22px;top:937px;width:1829px;height:25px;background:#ebebeb"></div>
<div style="position:absolute;left:22px;top:962px;width:1829px;height:1px;background:#d5d5d5"></div>
<div style="position:absolute;left:216px;top:937px;width:1px;height:25px;background:#d9d9d9"></div>
<div style="position:absolute;left:351px;top:937px;width:1px;height:25px;background:#d9d9d9"></div>
<div style="position:absolute;left:455px;top:937px;width:1px;height:25px;background:#d9d9d9"></div>
<div style="position:absolute;left:545px;top:937px;width:1px;height:25px;background:#d9d9d9"></div>
<div style="position:absolute;left:694px;top:937px;width:1px;height:25px;background:#d9d9d9"></div>
<div style="position:absolute;left:844px;top:937px;width:1px;height:25px;background:#d9d9d9"></div>
<div style="position:absolute;left:993px;top:937px;width:1px;height:25px;background:#d9d9d9"></div>
<div style="position:absolute;left:1143px;top:937px;width:1px;height:25px;background:#d9d9d9"></div>
<div style="position:absolute;left:1326px;top:937px;width:1px;height:25px;background:#d9d9d9"></div>
<div style="position:absolute;left:1475px;top:937px;width:1px;height:25px;background:#d9d9d9"></div>
<div style="position:absolute;left:1719px;top:937px;width:1px;height:25px;background:#d9d9d9"></div>
<svg style="position:absolute;left:27px;top:939px" width="16" height="21" viewBox="0 0 16 21"><rect x="1.5" y="1.5" width="12.5" height="17.5" rx="2.2" fill="#fff" stroke="#1a69b0" stroke-width="2"/><path d="M6.2 6.8 H9.3 M6.2 10.8 H9.3" stroke="#1a69b0" stroke-width="1.7"/></svg>
<div style="position:absolute;left:50px;top:940px;line-height:21px;white-space:nowrap;font-size:16.5px;color:#000">2024.10.08 14:27:11</div>
<div style="position:absolute;left:47.5px;width:300px;text-align:right;top:940px;line-height:21px;white-space:nowrap;font-size:16.5px;color:#000">xauusdm</div>
<div style="position:absolute;left:151.3px;width:300px;text-align:right;top:940px;line-height:21px;white-space:nowrap;font-size:16.5px;color:#000;letter-spacing:0.3px">294175729</div>
<div style="position:absolute;left:241px;width:300px;text-align:right;top:940px;line-height:21px;white-space:nowrap;font-size:16.5px;color:#000">buy</div>
<div style="position:absolute;left:390.79999999999995px;width:300px;text-align:right;top:940px;line-height:21px;white-space:nowrap;font-size:16.5px;color:#000;letter-spacing:0.3px">1.3</div>
<div style="position:absolute;left:540.8px;width:300px;text-align:right;top:940px;line-height:21px;white-space:nowrap;font-size:16.5px;color:#000;letter-spacing:0.3px">2628.000</div>
<div style="position:absolute;left:1021.5px;width:300px;text-align:right;top:940px;line-height:21px;white-space:nowrap;font-size:16.5px;color:#000">2024.10.09 11:16:32</div>
<div style="position:absolute;left:1171.8px;width:300px;text-align:right;top:940px;line-height:21px;white-space:nowrap;font-size:16.5px;color:#000;letter-spacing:0.3px">2621.684</div>
<div style="position:absolute;left:1415px;width:300px;text-align:right;top:940px;line-height:21px;white-space:nowrap;font-size:16.5px;color:#ff0000">-821.08</div>
<div style="position:absolute;left:1546.5px;width:300px;text-align:right;top:940px;line-height:21px;white-space:nowrap;font-size:16.5px;color:#ff0000">-0.24 %</div>
<div style="position:absolute;left:22px;top:963px;width:1829px;height:25px;background:#ffffff"></div>
<div style="position:absolute;left:22px;top:988px;width:1829px;height:1px;background:#d5d5d5"></div>
<div style="position:absolute;left:216px;top:963px;width:1px;height:25px;background:#d9d9d9"></div>
<div style="position:absolute;left:351px;top:963px;width:1px;height:25px;background:#d9d9d9"></div>
<div style="position:absolute;left:455px;top:963px;width:1px;height:25px;background:#d9d9d9"></div>
<div style="position:absolute;left:545px;top:963px;width:1px;height:25px;background:#d9d9d9"></div>
<div style="position:absolute;left:694px;top:963px;width:1px;height:25px;background:#d9d9d9"></div>
<div style="position:absolute;left:844px;top:963px;width:1px;height:25px;background:#d9d9d9"></div>
<div style="position:absolute;left:993px;top:963px;width:1px;height:25px;background:#d9d9d9"></div>
<div style="position:absolute;left:1143px;top:963px;width:1px;height:25px;background:#d9d9d9"></div>
<div style="position:absolute;left:1326px;top:963px;width:1px;height:25px;background:#d9d9d9"></div>
<div style="position:absolute;left:1475px;top:963px;width:1px;height:25px;background:#d9d9d9"></div>
<div style="position:absolute;left:1719px;top:963px;width:1px;height:25px;background:#d9d9d9"></div>
<svg style="position:absolute;left:27px;top:965px" width="16" height="21" viewBox="0 0 16 21"><rect x="1.5" y="1.5" width="12.5" height="17.5" rx="2.2" fill="#fff" stroke="#e0403a" stroke-width="2"/><path d="M6.2 6.8 H9.3 M6.2 10.8 H9.3" stroke="#e0403a" stroke-width="1.7"/></svg>
<div style="position:absolute;left:50px;top:966px;line-height:21px;white-space:nowrap;font-size:16.5px;color:#000">2024.10.11 01:34:33</div>
<div style="position:absolute;left:47.5px;width:300px;text-align:right;top:966px;line-height:21px;white-space:nowrap;font-size:16.5px;color:#000">xauusdm</div>
<div style="position:absolute;left:151.3px;width:300px;text-align:right;top:966px;line-height:21px;white-space:nowrap;font-size:16.5px;color:#000;letter-spacing:0.3px">296349762</div>
<div style="position:absolute;left:241px;width:300px;text-align:right;top:966px;line-height:21px;white-space:nowrap;font-size:16.5px;color:#000">sell</div>
<div style="position:absolute;left:390.79999999999995px;width:300px;text-align:right;top:966px;line-height:21px;white-space:nowrap;font-size:16.5px;color:#000;letter-spacing:0.3px">1.3</div>
<div style="position:absolute;left:540.8px;width:300px;text-align:right;top:966px;line-height:21px;white-space:nowrap;font-size:16.5px;color:#000;letter-spacing:0.3px">2634.724</div>
<div style="position:absolute;left:1021.5px;width:300px;text-align:right;top:966px;line-height:21px;white-space:nowrap;font-size:16.5px;color:#000">2024.10.11 01:39:40</div>
<div style="position:absolute;left:1171.8px;width:300px;text-align:right;top:966px;line-height:21px;white-space:nowrap;font-size:16.5px;color:#000;letter-spacing:0.3px">2634.448</div>
<div style="position:absolute;left:1415px;width:300px;text-align:right;top:966px;line-height:21px;white-space:nowrap;font-size:16.5px;color:#0000ff">35.88</div>
<div style="position:absolute;left:1546.5px;width:300px;text-align:right;top:966px;line-height:21px;white-space:nowrap;font-size:16.5px;color:#0000ff">0.01 %</div>
<div style="position:absolute;left:22px;top:989px;width:1829px;height:25px;background:#ebebeb"></div>
<div style="position:absolute;left:22px;top:1014px;width:1829px;height:1px;background:#d5d5d5"></div>
<div style="position:absolute;left:216px;top:989px;width:1px;height:25px;background:#d9d9d9"></div>
<div style="position:absolute;left:351px;top:989px;width:1px;height:25px;background:#d9d9d9"></div>
<div style="position:absolute;left:455px;top:989px;width:1px;height:25px;background:#d9d9d9"></div>
<div style="position:absolute;left:545px;top:989px;width:1px;height:25px;background:#d9d9d9"></div>
<div style="position:absolute;left:694px;top:989px;width:1px;height:25px;background:#d9d9d9"></div>
<div style="position:absolute;left:844px;top:989px;width:1px;height:25px;background:#d9d9d9"></div>
<div style="position:absolute;left:993px;top:989px;width:1px;height:25px;background:#d9d9d9"></div>
<div style="position:absolute;left:1143px;top:989px;width:1px;height:25px;background:#d9d9d9"></div>
<div style="position:absolute;left:1326px;top:989px;width:1px;height:25px;background:#d9d9d9"></div>
<div style="position:absolute;left:1475px;top:989px;width:1px;height:25px;background:#d9d9d9"></div>
<div style="position:absolute;left:1719px;top:989px;width:1px;height:25px;background:#d9d9d9"></div>
<svg style="position:absolute;left:27px;top:991px" width="16" height="21" viewBox="0 0 16 21"><rect x="1.5" y="1.5" width="12.5" height="17.5" rx="2.2" fill="#fff" stroke="#e0403a" stroke-width="2"/><path d="M6.2 6.8 H9.3 M6.2 10.8 H9.3" stroke="#e0403a" stroke-width="1.7"/></svg>
<div style="position:absolute;left:50px;top:992px;line-height:21px;white-space:nowrap;font-size:16.5px;color:#000">2024.10.11 02:23:57</div>
<div style="position:absolute;left:47.5px;width:300px;text-align:right;top:992px;line-height:21px;white-space:nowrap;font-size:16.5px;color:#000">xauusdm</div>
<div style="position:absolute;left:151.3px;width:300px;text-align:right;top:992px;line-height:21px;white-space:nowrap;font-size:16.5px;color:#000;letter-spacing:0.3px">296365127</div>
<div style="position:absolute;left:241px;width:300px;text-align:right;top:992px;line-height:21px;white-space:nowrap;font-size:16.5px;color:#000">sell</div>
<div style="position:absolute;left:390.79999999999995px;width:300px;text-align:right;top:992px;line-height:21px;white-space:nowrap;font-size:16.5px;color:#000;letter-spacing:0.3px">1.3</div>
<div style="position:absolute;left:540.8px;width:300px;text-align:right;top:992px;line-height:21px;white-space:nowrap;font-size:16.5px;color:#000;letter-spacing:0.3px">2638.000</div>
<div style="position:absolute;left:1021.5px;width:300px;text-align:right;top:992px;line-height:21px;white-space:nowrap;font-size:16.5px;color:#000">2024.10.11 07:17:26</div>
<div style="position:absolute;left:1171.8px;width:300px;text-align:right;top:992px;line-height:21px;white-space:nowrap;font-size:16.5px;color:#000;letter-spacing:0.3px">2639.956</div>
<div style="position:absolute;left:1415px;width:300px;text-align:right;top:992px;line-height:21px;white-space:nowrap;font-size:16.5px;color:#ff0000">-254.28</div>
<div style="position:absolute;left:1546.5px;width:300px;text-align:right;top:992px;line-height:21px;white-space:nowrap;font-size:16.5px;color:#ff0000">-0.07 %</div>
<div style="position:absolute;left:22px;top:1015px;width:1829px;height:25px;background:#ffffff"></div>
<div style="position:absolute;left:22px;top:1040px;width:1829px;height:1px;background:#d5d5d5"></div>
<div style="position:absolute;left:216px;top:1015px;width:1px;height:25px;background:#d9d9d9"></div>
<div style="position:absolute;left:351px;top:1015px;width:1px;height:25px;background:#d9d9d9"></div>
<div style="position:absolute;left:455px;top:1015px;width:1px;height:25px;background:#d9d9d9"></div>
<div style="position:absolute;left:545px;top:1015px;width:1px;height:25px;background:#d9d9d9"></div>
<div style="position:absolute;left:694px;top:1015px;width:1px;height:25px;background:#d9d9d9"></div>
<div style="position:absolute;left:844px;top:1015px;width:1px;height:25px;background:#d9d9d9"></div>
<div style="position:absolute;left:993px;top:1015px;width:1px;height:25px;background:#d9d9d9"></div>
<div style="position:absolute;left:1143px;top:1015px;width:1px;height:25px;background:#d9d9d9"></div>
<div style="position:absolute;left:1326px;top:1015px;width:1px;height:25px;background:#d9d9d9"></div>
<div style="position:absolute;left:1475px;top:1015px;width:1px;height:25px;background:#d9d9d9"></div>
<div style="position:absolute;left:1719px;top:1015px;width:1px;height:25px;background:#d9d9d9"></div>
<svg style="position:absolute;left:27px;top:1017px" width="16" height="21" viewBox="0 0 16 21"><rect x="1.5" y="1.5" width="12.5" height="17.5" rx="2.2" fill="#fff" stroke="#e0403a" stroke-width="2"/><path d="M6.2 6.8 H9.3 M6.2 10.8 H9.3" stroke="#e0403a" stroke-width="1.7"/></svg>
<div style="position:absolute;left:50px;top:1018px;line-height:21px;white-space:nowrap;font-size:16.5px;color:#000">2024.10.11 12:20:48</div>
<div style="position:absolute;left:47.5px;width:300px;text-align:right;top:1018px;line-height:21px;white-space:nowrap;font-size:16.5px;color:#000">xauusdm</div>
<div style="position:absolute;left:151.3px;width:300px;text-align:right;top:1018px;line-height:21px;white-space:nowrap;font-size:16.5px;color:#000;letter-spacing:0.3px">296620189</div>
<div style="position:absolute;left:241px;width:300px;text-align:right;top:1018px;line-height:21px;white-space:nowrap;font-size:16.5px;color:#000">sell</div>
<div style="position:absolute;left:390.79999999999995px;width:300px;text-align:right;top:1018px;line-height:21px;white-space:nowrap;font-size:16.5px;color:#000;letter-spacing:0.3px">1.3</div>
<div style="position:absolute;left:540.8px;width:300px;text-align:right;top:1018px;line-height:21px;white-space:nowrap;font-size:16.5px;color:#000;letter-spacing:0.3px">2648.000</div>
<div style="position:absolute;left:1021.5px;width:300px;text-align:right;top:1018px;line-height:21px;white-space:nowrap;font-size:16.5px;color:#000">2024.10.14 00:15:56</div>
<div style="position:absolute;left:1171.8px;width:300px;text-align:right;top:1018px;line-height:21px;white-space:nowrap;font-size:16.5px;color:#000;letter-spacing:0.3px">2646.390</div>
<div style="position:absolute;left:1415px;width:300px;text-align:right;top:1018px;line-height:21px;white-space:nowrap;font-size:16.5px;color:#0000ff">209.30</div>
<div style="position:absolute;left:1546.5px;width:300px;text-align:right;top:1018px;line-height:21px;white-space:nowrap;font-size:16.5px;color:#0000ff">0.06 %</div>
<div style="position:absolute;left:22px;top:1041px;width:1829px;height:25px;background:#ebebeb"></div>
<div style="position:absolute;left:22px;top:1066px;width:1829px;height:1px;background:#d5d5d5"></div>
<div style="position:absolute;left:216px;top:1041px;width:1px;height:25px;background:#d9d9d9"></div>
<div style="position:absolute;left:351px;top:1041px;width:1px;height:25px;background:#d9d9d9"></div>
<div style="position:absolute;left:455px;top:1041px;width:1px;height:25px;background:#d9d9d9"></div>
<div style="position:absolute;left:545px;top:1041px;width:1px;height:25px;background:#d9d9d9"></div>
<div style="position:absolute;left:694px;top:1041px;width:1px;height:25px;background:#d9d9d9"></div>
<div style="position:absolute;left:844px;top:1041px;width:1px;height:25px;background:#d9d9d9"></div>
<div style="position:absolute;left:993px;top:1041px;width:1px;height:25px;background:#d9d9d9"></div>
<div style="position:absolute;left:1143px;top:1041px;width:1px;height:25px;background:#d9d9d9"></div>
<div style="position:absolute;left:1326px;top:1041px;width:1px;height:25px;background:#d9d9d9"></div>
<div style="position:absolute;left:1475px;top:1041px;width:1px;height:25px;background:#d9d9d9"></div>
<div style="position:absolute;left:1719px;top:1041px;width:1px;height:25px;background:#d9d9d9"></div>
<svg style="position:absolute;left:27px;top:1043px" width="16" height="21" viewBox="0 0 16 21"><rect x="1.5" y="1.5" width="12.5" height="17.5" rx="2.2" fill="#fff" stroke="#e0403a" stroke-width="2"/><path d="M6.2 6.8 H9.3 M6.2 10.8 H9.3" stroke="#e0403a" stroke-width="1.7"/></svg>
<div style="position:absolute;left:50px;top:1044px;line-height:21px;white-space:nowrap;font-size:16.5px;color:#000">2024.10.11 03:04:12</div>
<div style="position:absolute;left:47.5px;width:300px;text-align:right;top:1044px;line-height:21px;white-space:nowrap;font-size:16.5px;color:#000">xauusdm</div>
<div style="position:absolute;left:151.3px;width:300px;text-align:right;top:1044px;line-height:21px;white-space:nowrap;font-size:16.5px;color:#000;letter-spacing:0.3px">296447515</div>
<div style="position:absolute;left:241px;width:300px;text-align:right;top:1044px;line-height:21px;white-space:nowrap;font-size:16.5px;color:#000">sell</div>
<div style="position:absolute;left:390.79999999999995px;width:300px;text-align:right;top:1044px;line-height:21px;white-space:nowrap;font-size:16.5px;color:#000;letter-spacing:0.3px">1.3</div>
<div style="position:absolute;left:540.8px;width:300px;text-align:right;top:1044px;line-height:21px;white-space:nowrap;font-size:16.5px;color:#000;letter-spacing:0.3px">2643.666</div>
<div style="position:absolute;left:1021.5px;width:300px;text-align:right;top:1044px;line-height:21px;white-space:nowrap;font-size:16.5px;color:#000">2024.10.14 00:18:04</div>
<div style="position:absolute;left:1171.8px;width:300px;text-align:right;top:1044px;line-height:21px;white-space:nowrap;font-size:16.5px;color:#000;letter-spacing:0.3px">2646.562</div>
<div style="position:absolute;left:1415px;width:300px;text-align:right;top:1044px;line-height:21px;white-space:nowrap;font-size:16.5px;color:#000">0.00</div>
<div style="position:absolute;left:1546.5px;width:300px;text-align:right;top:1044px;line-height:21px;white-space:nowrap;font-size:16.5px;color:#000">-0.11 %</div>
<div style="position:absolute;left:22px;top:1067px;width:1829px;height:25px;background:#ffffff"></div>
<div style="position:absolute;left:22px;top:1092px;width:1829px;height:1px;background:#d5d5d5"></div>
<div style="position:absolute;left:216px;top:1067px;width:1px;height:25px;background:#d9d9d9"></div>
<div style="position:absolute;left:351px;top:1067px;width:1px;height:25px;background:#d9d9d9"></div>
<div style="position:absolute;left:455px;top:1067px;width:1px;height:25px;background:#d9d9d9"></div>
<div style="position:absolute;left:545px;top:1067px;width:1px;height:25px;background:#d9d9d9"></div>
<div style="position:absolute;left:694px;top:1067px;width:1px;height:25px;background:#d9d9d9"></div>
<div style="position:absolute;left:844px;top:1067px;width:1px;height:25px;background:#d9d9d9"></div>
<div style="position:absolute;left:993px;top:1067px;width:1px;height:25px;background:#d9d9d9"></div>
<div style="position:absolute;left:1143px;top:1067px;width:1px;height:25px;background:#d9d9d9"></div>
<div style="position:absolute;left:1326px;top:1067px;width:1px;height:25px;background:#d9d9d9"></div>
<div style="position:absolute;left:1475px;top:1067px;width:1px;height:25px;background:#d9d9d9"></div>
<div style="position:absolute;left:1719px;top:1067px;width:1px;height:25px;background:#d9d9d9"></div>
<svg style="position:absolute;left:27px;top:1069px" width="16" height="21" viewBox="0 0 16 21"><rect x="1.5" y="1.5" width="12.5" height="17.5" rx="2.2" fill="#fff" stroke="#1a69b0" stroke-width="2"/><path d="M6.2 6.8 H9.3 M6.2 10.8 H9.3" stroke="#1a69b0" stroke-width="1.7"/></svg>
<div style="position:absolute;left:50px;top:1070px;line-height:21px;white-space:nowrap;font-size:16.5px;color:#000">2024.10.14 00:17:48</div>
<div style="position:absolute;left:47.5px;width:300px;text-align:right;top:1070px;line-height:21px;white-space:nowrap;font-size:16.5px;color:#000">xauusdm</div>
<div style="position:absolute;left:151.3px;width:300px;text-align:right;top:1070px;line-height:21px;white-space:nowrap;font-size:16.5px;color:#000;letter-spacing:0.3px">297403080</div>
<div style="position:absolute;left:241px;width:300px;text-align:right;top:1070px;line-height:21px;white-space:nowrap;font-size:16.5px;color:#000">buy</div>
<div style="position:absolute;left:390.79999999999995px;width:300px;text-align:right;top:1070px;line-height:21px;white-space:nowrap;font-size:16.5px;color:#000;letter-spacing:0.3px">1.3</div>
<div style="position:absolute;left:540.8px;width:300px;text-align:right;top:1070px;line-height:21px;white-space:nowrap;font-size:16.5px;color:#000;letter-spacing:0.3px">2646.562</div>
<div style="position:absolute;left:1021.5px;width:300px;text-align:right;top:1070px;line-height:21px;white-space:nowrap;font-size:16.5px;color:#000">2024.10.14 00:19:04</div>
<div style="position:absolute;left:1171.8px;width:300px;text-align:right;top:1070px;line-height:21px;white-space:nowrap;font-size:16.5px;color:#000;letter-spacing:0.3px">2643.666</div>
<div style="position:absolute;left:1415px;width:300px;text-align:right;top:1070px;line-height:21px;white-space:nowrap;font-size:16.5px;color:#ff0000">-370.48</div>
<div style="position:absolute;left:1546.5px;width:300px;text-align:right;top:1070px;line-height:21px;white-space:nowrap;font-size:16.5px;color:#ff0000">-0.11 %</div></div>
<div style="position:absolute;left:1851px;top:233px;width:9px;height:847px;background:#f0f0f0"></div>
<div style="position:absolute;left:1858px;top:452px;width:2px;height:405px;background:#858585"></div>
<div style="position:absolute;left:22px;top:1076px;width:1838px;height:4px;background:#f0f0f0"></div>
<div style="position:absolute;left:22px;top:1076px;width:1838px;height:1px;background:#111"></div>
<div style="position:absolute;left:22px;top:1077px;width:1838px;height:1px;background:#8a8a8a"></div>
<div style="position:absolute;left:1480px;top:995px;width:380px;height:80px;pointer-events:none"><svg style="position:absolute;left:0;top:0;filter:drop-shadow(0 0 1.2px rgba(60,60,60,0.75))" width="90" height="80" viewBox="1480 995 90 80"><path d="M1491.5 1050 C1486 1040 1494 1024 1508 1017 C1515 1013.5 1520 1014 1519.5 1019 L1518.5 1024.5 C1526 1021 1534 1022 1536.5 1027 C1538 1030 1537.5 1033 1537 1035 C1544 1038 1545 1046 1540 1051 C1532 1059 1502 1063 1491.5 1050 Z" fill="rgba(255,255,255,0.95)"/><ellipse cx="1512.3" cy="1044" rx="18" ry="11.8" fill="rgba(170,170,170,0.85)"/><ellipse cx="1511" cy="1044.6" rx="10.2" ry="8" fill="rgba(255,255,255,0.97)"/><circle cx="1507.8" cy="1046.4" r="2.8" fill="rgba(140,140,140,0.9)"/><circle cx="1513.7" cy="1042.9" r="1.2" fill="rgba(140,140,140,0.9)"/><path d="M1532 1010 Q1548 1012 1549 1028" stroke="rgba(255,255,255,0.97)" stroke-width="4.2" fill="none" stroke-linecap="round"/><path d="M1533 1019.5 Q1540 1020.5 1540.5 1029" stroke="rgba(215,215,215,0.95)" stroke-width="4" fill="none" stroke-linecap="round"/></svg><div style="position:absolute;left:79px;top:13px;font-size:46.5px;line-height:54px;color:#fff;-webkit-text-stroke:1.3px #fff;white-space:nowrap;opacity:0.92;filter:drop-shadow(0 0 1.3px rgba(60,60,60,0.85)) drop-shadow(1px 1px 1.5px rgba(90,90,90,0.5))">@汇市乔先生</div></div>
</body></html>
